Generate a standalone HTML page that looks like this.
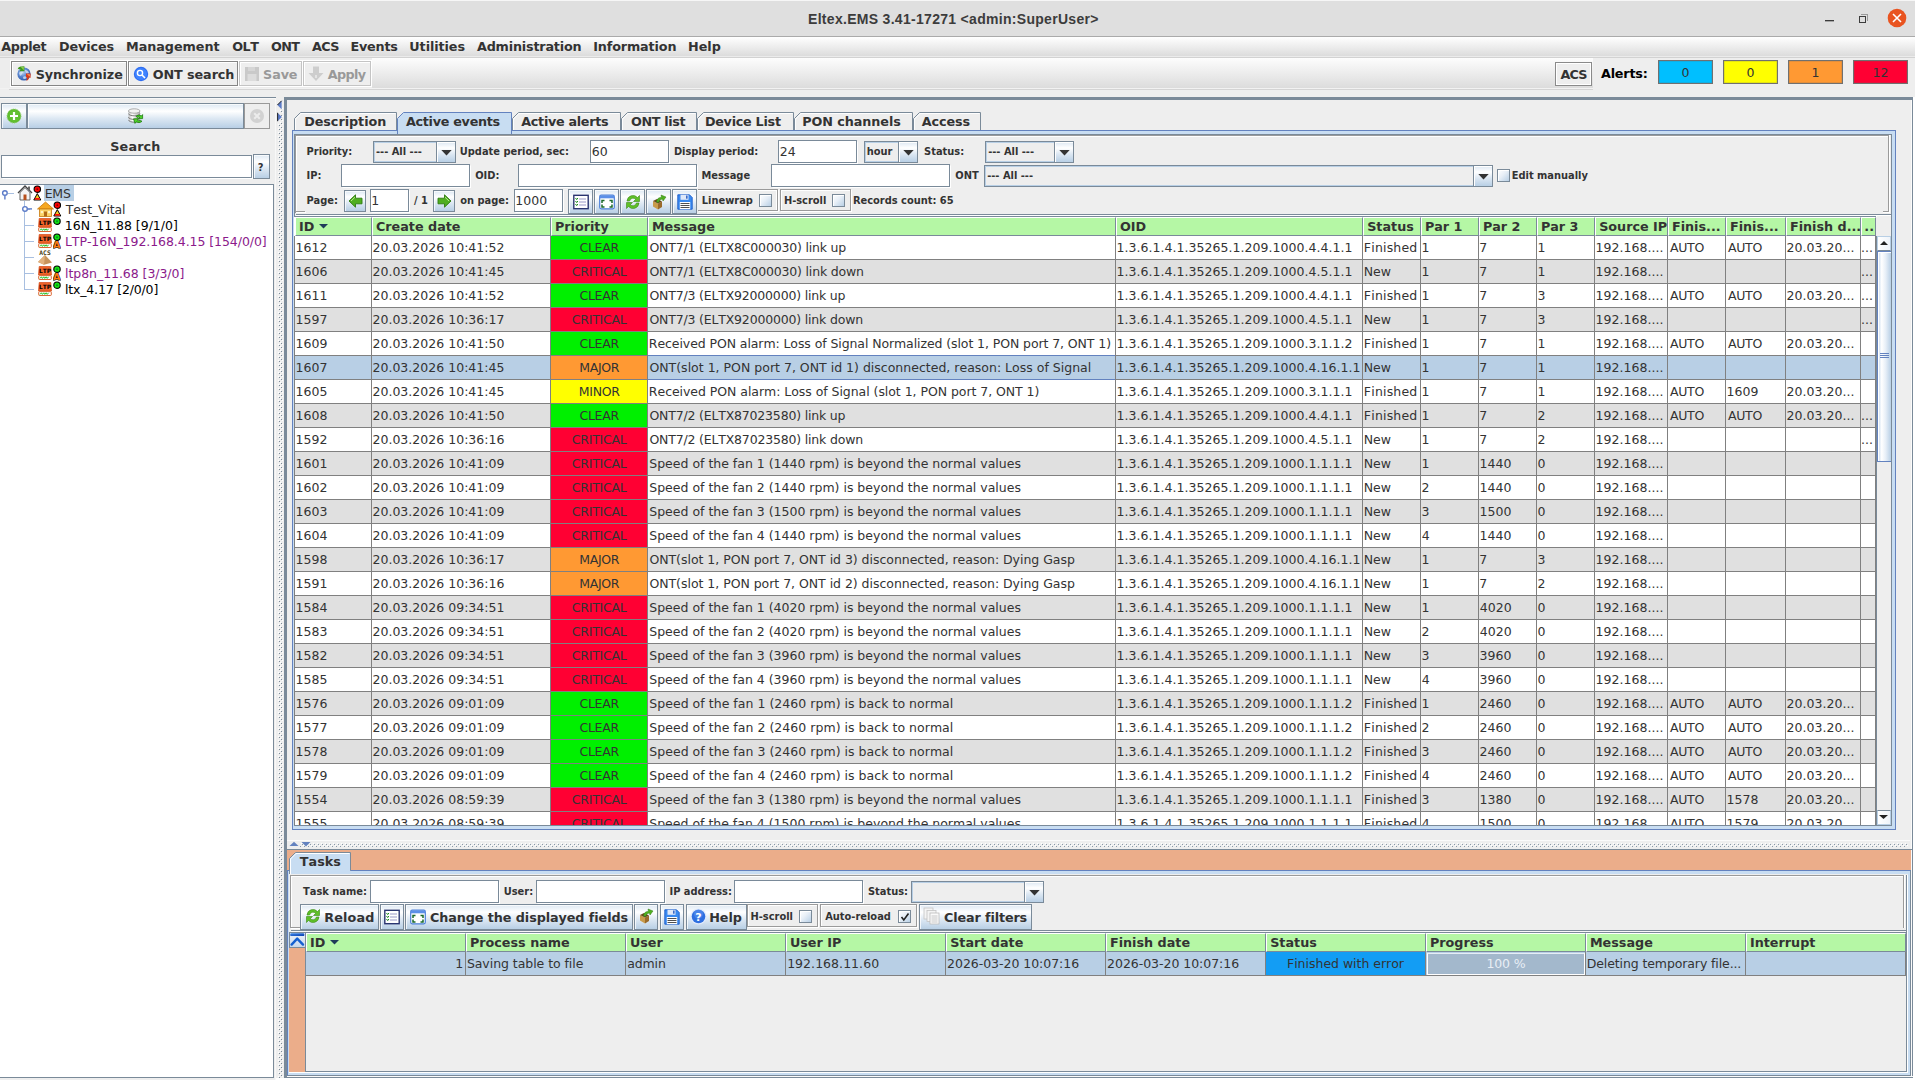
<!DOCTYPE html>
<html lang="en"><head><meta charset="utf-8"><title>Eltex.EMS 3.41-17271 &lt;admin:SuperUser&gt;</title>
<style>
html,body{margin:0;padding:0;background:#eeeeee;}
body{width:1915px;height:1080px;overflow:hidden;font-family:"DejaVu Sans","Liberation Sans",sans-serif;font-size:13px;color:#333333;font-kerning:none;font-variant-ligatures:none;-webkit-font-smoothing:antialiased;}
#root{position:relative;width:1915px;height:1080px;overflow:hidden;background:#eeeeee;}
#root div,#root span.t,#root svg{position:absolute;box-sizing:border-box;}
.t{white-space:pre;}
.btn{border:1px solid #7a8a99;background:linear-gradient(#dde8f3 0%,#ffffff 45%,#ffffff 50%,#b8cfe5 100%);}
.btn:after{content:"";position:absolute;left:0;top:0;right:0;bottom:0;border:1px solid #ffffff;border-right-color:transparent;border-bottom-color:transparent;}
.tf{border:1px solid #7a8a99;background:#ffffff;}
.tf:after{content:"";position:absolute;left:0;top:0;right:-2px;bottom:-2px;border:1px solid transparent;border-right-color:#ffffff;border-bottom-color:#ffffff;}
.hd{background:#b5f7a5;border-right:1px solid #7a8a99;border-bottom:1px solid #7a8a99;border-left:1px solid #ffffff;border-top:1px solid #ffffff;}

</style></head>
<body>
<div id="root">
<div style="left:0px;top:0px;width:1915px;height:37px;background:#dfdfdf;border-top:1px solid #f6f6f6;border-bottom:1px solid #aaaaaa;"></div>
<span class="t" style="left:808px;top:9px;width:290px;text-align:center;font:bold 14px/20px 'Liberation Sans','DejaVu Sans',sans-serif;color:#3c3c3c;letter-spacing:0.3px;">Eltex.EMS 3.41-17271 &lt;admin:SuperUser&gt;</span>
<div style="left:1825px;top:20px;width:9px;height:1px;background:#3c3c3c;"></div>
<div style="left:1825px;top:21px;width:9px;height:1px;background:#3c3c3c;opacity:.35;"></div>
<div style="left:1861px;top:14px;width:7px;height:7px;border:1px solid #9a9a9a;border-left:none;border-bottom:none;"></div>
<div style="left:1859px;top:16px;width:7px;height:7px;border:1.5px solid #3c3c3c;background:#dfdfdf;"></div>
<svg style="left:1887px;top:8px" width="20" height="20" viewBox="0 0 20 20"><circle cx="10" cy="10" r="9.3" fill="#e95420"/><path d="M6 6 L14 14 M14 6 L6 14" stroke="#fff" stroke-width="1.6" fill="none"/></svg>
<div style="left:0px;top:37px;width:1915px;height:19px;background:linear-gradient(#ffffff 0%,#dcdcdc 100%);"></div>
<div style="left:0px;top:56px;width:1915px;height:1px;background:#ebebeb;"></div>
<div style="left:0px;top:57px;width:1915px;height:1px;background:#d2d2d2;"></div>
<span class="t" style="left:1.19px;top:39px;font-size:12.75px;line-height:16px;letter-spacing:-0.356px;font-weight:bold;color:#333;">Applet</span>
<span class="t" style="left:59.03px;top:39px;font-size:12.75px;line-height:16px;letter-spacing:-0.122px;font-weight:bold;color:#333;">Devices</span>
<span class="t" style="left:126.03px;top:39px;font-size:12.75px;line-height:16px;letter-spacing:-0.032px;font-weight:bold;color:#333;">Management</span>
<span class="t" style="left:232.16px;top:39px;font-size:12.75px;line-height:16px;letter-spacing:-0.478px;font-weight:bold;color:#333;">OLT</span>
<span class="t" style="left:270.96px;top:39px;font-size:12.75px;line-height:16px;letter-spacing:-0.652px;font-weight:bold;color:#333;">ONT</span>
<span class="t" style="left:312.04px;top:39px;font-size:12.75px;line-height:16px;letter-spacing:-0.556px;font-weight:bold;color:#333;">ACS</span>
<span class="t" style="left:350.43px;top:39px;font-size:12.75px;line-height:16px;letter-spacing:-0.191px;font-weight:bold;color:#333;">Events</span>
<span class="t" style="left:409.33px;top:39px;font-size:12.75px;line-height:16px;letter-spacing:-0.073px;font-weight:bold;color:#333;">Utilities</span>
<span class="t" style="left:476.94px;top:39px;font-size:12.75px;line-height:16px;letter-spacing:-0.178px;font-weight:bold;color:#333;">Administration</span>
<span class="t" style="left:593.23px;top:39px;font-size:12.75px;line-height:16px;letter-spacing:-0.134px;font-weight:bold;color:#333;">Information</span>
<span class="t" style="left:688.03px;top:39px;font-size:12.75px;line-height:16px;letter-spacing:-0.024px;font-weight:bold;color:#333;">Help</span>
<div style="left:0px;top:58px;width:1593px;height:30px;background:linear-gradient(#fdfdfd 0%,#dcdcdc 100%);"></div>
<div style="left:0px;top:88px;width:1593px;height:1px;background:#f2f2f2;"></div>
<div style="left:9px;top:89px;width:1584px;height:1px;background:#d4d4d4;"></div>
<div style="left:0px;top:58px;width:372px;height:30px;background:#ededed;"></div>
<div style="left:11px;top:61px;width:116px;height:25px;border:1px solid #858585;background:#eeeeee;box-shadow:inset 1px 1px 0 #ffffff, 0 0 0 1px #ffffff;"></div>
<span class="t" style="left:35.68px;top:67px;font-size:12.75px;line-height:16px;letter-spacing:-0.064px;font-weight:bold;color:#333;">Synchronize</span>
<svg style="left:16px;top:65px" width="17" height="17" viewBox="0 0 17 17"><defs><radialGradient id="gl" cx=".4" cy=".35" r=".7"><stop offset="0" stop-color="#c8d8f0"/><stop offset=".5" stop-color="#5a86d0"/><stop offset="1" stop-color="#2a56a8"/></radialGradient></defs><circle cx="8" cy="9" r="6.6" fill="url(#gl)"/><path d="M3 8 Q5 5 7 7 Q6 10 4 11 Z M9 5 Q12 5 13 8 Q11 9 9.5 7.5 Z M7 12 Q9 10.5 11 12.5 Q9.5 14.5 7.5 14 Z" fill="#dfe8f8" opacity=".75"/><path d="M1.6 4.2 Q2.4 1.2 5.2 1.6 L8.4 1.2 V6.2 H3.6 L4.6 4.2 Q3.2 3.6 1.6 4.2 Z" fill="#3f9a1c"/><path d="M4.8 2 H7.8 V5.2 Z" fill="#8fd050"/><path d="M10 8.4 H14.6 V13 L13.2 12.2 Q12.8 15 10.2 15.8 Q11.6 13.6 11 12 L10 13 Z" fill="#d8381c"/><path d="M10.8 9.2 H13.8 V11.6 Z" fill="#ff9a5a"/></svg>
<div style="left:128px;top:61px;width:110px;height:25px;border:1px solid #858585;background:#eeeeee;box-shadow:inset 1px 1px 0 #ffffff, 0 0 0 1px #ffffff;"></div>
<span class="t" style="left:152.76px;top:67px;font-size:12.75px;line-height:16px;letter-spacing:-0.086px;font-weight:bold;color:#333;">ONT search</span>
<svg style="left:133px;top:66px" width="16" height="16" viewBox="0 0 16 16"><circle cx="8" cy="8" r="7.2" fill="#2f6df0"/><circle cx="8" cy="8" r="6" fill="#3f83ff"/><circle cx="7" cy="7" r="2.6" fill="none" stroke="#fff" stroke-width="1.4"/><path d="M9 9 L12 12" stroke="#fff" stroke-width="1.6"/></svg>
<div style="left:239px;top:61px;width:63px;height:25px;border:1px solid #c4c4c4;background:#eeeeee;box-shadow:inset 1px 1px 0 #ffffff, 0 0 0 1px #ffffff;"></div>
<span class="t" style="left:263.08px;top:67px;font-size:12.75px;line-height:16px;letter-spacing:-0.105px;font-weight:bold;color:#999999;">Save</span>
<svg style="left:244px;top:66px" width="16" height="16" viewBox="0 0 16 16"><rect x="1" y="1" width="14" height="14" fill="#c9c9c9"/><rect x="3.5" y="8" width="9" height="7" fill="#dcdcdc"/><rect x="4" y="1" width="7" height="4" fill="#d6d6d6"/></svg>
<div style="left:303px;top:61px;width:68px;height:25px;border:1px solid #c4c4c4;background:#eeeeee;box-shadow:inset 1px 1px 0 #ffffff, 0 0 0 1px #ffffff;"></div>
<span class="t" style="left:327.74px;top:67px;font-size:12.75px;line-height:16px;letter-spacing:-0.627px;font-weight:bold;color:#999999;">Apply</span>
<svg style="left:308px;top:66px" width="16" height="16" viewBox="0 0 16 16"><path d="M5 .5 H11 V7 H15.5 L8 15 L.5 7 H5 Z" fill="#cdcdcd"/><rect x="7.3" y="9" width="1.4" height="3" fill="#eee"/></svg>
<div style="left:1555px;top:62px;width:37px;height:24px;border:1px solid #8a8a8a;background:#eeeeee;box-shadow:inset 1px 1px 0 #ffffff,inset -1px -1px 0 #ffffff;"></div>
<span class="t" style="left:1560.44px;top:67px;font-size:12.75px;line-height:16px;letter-spacing:-0.706px;font-weight:bold;color:#333;">ACS</span>
<span class="t" style="left:1600.94px;top:66px;font-size:12.75px;line-height:16px;letter-spacing:-0.178px;font-weight:bold;color:#000;">Alerts:</span>
<div style="left:1658px;top:60px;width:55px;height:24px;background:#00bfff;border:1px solid #707070;box-shadow:inset 0 0 0 .5px rgba(100,100,100,.35);"></div>
<span class="t" style="left:1681.50px;top:65px;font-size:12.5px;line-height:16px;letter-spacing:0.047px;color:#333;">0</span>
<div style="left:1723px;top:60px;width:55px;height:24px;background:#ffff00;border:1px solid #707070;box-shadow:inset 0 0 0 .5px rgba(100,100,100,.35);"></div>
<span class="t" style="left:1746.50px;top:65px;font-size:12.5px;line-height:16px;letter-spacing:0.047px;color:#333;">0</span>
<div style="left:1788px;top:60px;width:55px;height:24px;background:#ff9933;border:1px solid #707070;box-shadow:inset 0 0 0 .5px rgba(100,100,100,.35);"></div>
<span class="t" style="left:1811.50px;top:65px;font-size:12.5px;line-height:16px;letter-spacing:0.047px;color:#333;">1</span>
<div style="left:1853px;top:60px;width:55px;height:24px;background:#ff0033;border:1px solid #707070;box-shadow:inset 0 0 0 .5px rgba(100,100,100,.35);"></div>
<span class="t" style="left:1872.50px;top:65px;font-size:12.5px;line-height:16px;letter-spacing:0.047px;color:#333;">12</span>
<div style="left:0px;top:97px;width:276px;height:1px;background:#7a8a99;"></div>
<div style="left:0px;top:98px;width:276px;height:1px;background:#f8f8f8;"></div>
<div style="left:275px;top:98px;width:1px;height:982px;background:#f8f8f8;"></div>
<div style="left:1px;top:103px;width:26px;height:26px;border:1px solid #7a8a99;background:linear-gradient(#dde8f3 0%,#ffffff 30%,#dde8f3 60%,#b8cfe5 100%);box-shadow:inset 1px 1px 0 rgba(255,255,255,.75);"></div>
<div style="left:27px;top:103px;width:217px;height:26px;border:1px solid #7a8a99;background:linear-gradient(#dde8f3 0%,#ffffff 30%,#dde8f3 60%,#b8cfe5 100%);box-shadow:inset 1px 1px 0 rgba(255,255,255,.75);"></div>
<div style="left:244px;top:103px;width:26px;height:26px;border:1px solid #999999;background:#eeeeee;"></div>
<svg style="left:6px;top:108px" width="16" height="16" viewBox="0 0 16 16"><circle cx="8" cy="8" r="7" fill="#5cb82c" stroke="#8fd06a" stroke-width="1" stroke-dasharray="1 1"/><circle cx="8" cy="8" r="6" fill="#62c030"/><path d="M8 4 V12 M4 8 H12" stroke="#fff" stroke-width="2.2"/></svg>
<svg style="left:128px;top:108px" width="16" height="17" viewBox="0 0 16 17"><defs><linearGradient id="dbg" x1="0" x2="1"><stop offset="0" stop-color="#c4c4c4"/><stop offset=".35" stop-color="#ffffff"/><stop offset="1" stop-color="#a8a8a8"/></linearGradient></defs><path d="M.5 3 V11.5 A5.7 2.3 0 0 0 12 11.5 V3 Z" fill="url(#dbg)"/><ellipse cx="6.2" cy="3" rx="5.8" ry="2.2" fill="#f4f4f4" stroke="#9a9a9a" stroke-width=".8"/><path d="M.5 5.6 A5.7 2.2 0 0 0 12 5.6 M.5 9.2 A5.7 2.2 0 0 0 12 9.2 M.6 12 A5.7 2.2 0 0 0 12 12" fill="none" stroke="#7e7e7e" stroke-width="1"/><path d="M8 8.2 Q11 6 13.4 8 L14.6 6.6 V10.6 H10.4 L11.8 9.4 Q10.6 8.4 9 9.4 Z" fill="#4ed62a" stroke="#1f7a12" stroke-width=".8"/><path d="M14 13.4 Q11 15.8 8.2 13.8 L7 15.4 L5.6 10.8 H10.2 L9.6 12.4 Q10.8 13.4 12.6 12.4 Z" fill="#4ed62a" stroke="#1f7a12" stroke-width=".8"/></svg>
<svg style="left:249px;top:108px" width="16" height="16" viewBox="0 0 16 16"><circle cx="8" cy="8" r="7" fill="#d2d2d2"/><path d="M5.2 5.2 L10.8 10.8 M10.8 5.2 L5.2 10.8" stroke="#ececec" stroke-width="2"/></svg>
<span class="t" style="left:110.28px;top:139px;font-size:12.75px;line-height:16px;letter-spacing:0.151px;font-weight:bold;color:#333;">Search</span>
<div class="tf" style="left:1px;top:155px;width:251px;height:23px;"></div>
<div style="left:253px;top:154px;width:17px;height:25px;border:1px solid #7a8a99;background:linear-gradient(#dde8f3 0%,#ffffff 30%,#dde8f3 60%,#b8cfe5 100%);box-shadow:inset 1px 1px 0 rgba(255,255,255,.75);"></div>
<span class="t" style="left:257.82px;top:162px;font-size:9.9px;line-height:12px;font-weight:bold;color:#333;">?</span>
<div style="left:0px;top:184px;width:274px;height:894px;background:#ffffff;border:1px solid #7a8a99;border-left:none;"></div>
<div style="left:44px;top:185px;width:30px;height:16px;background:#b8cfe5;"></div>
<div style="left:8px;top:193px;width:6px;height:1px;background:#a8bfe0;"></div>
<div style="left:24px;top:201px;width:1px;height:89px;background:#a8bfe0;"></div>
<div style="left:24px;top:209px;width:6px;height:1px;background:#a8bfe0;"></div>
<div style="left:24px;top:225px;width:10px;height:1px;background:#a8bfe0;"></div>
<div style="left:24px;top:241px;width:10px;height:1px;background:#a8bfe0;"></div>
<div style="left:24px;top:257px;width:10px;height:1px;background:#a8bfe0;"></div>
<div style="left:24px;top:273px;width:10px;height:1px;background:#a8bfe0;"></div>
<div style="left:24px;top:289px;width:10px;height:1px;background:#a8bfe0;"></div>
<svg style="left:0px;top:189px" width="10" height="12" viewBox="0 0 10 12"><circle cx="4.9" cy="4" r="2.3" fill="#fff" stroke="#5b7bc8" stroke-width="1.4"/><path d="M4.9 6.5 V10.6" stroke="#5b7bc8" stroke-width="1.4"/></svg>
<svg style="left:21px;top:204px" width="12" height="10" viewBox="0 0 12 10"><circle cx="4" cy="4.9" r="2.3" fill="#fff" stroke="#5b7bc8" stroke-width="1.4"/><path d="M6.4 4.9 H11" stroke="#5b7bc8" stroke-width="1.4"/></svg>
<svg style="left:17px;top:185px" width="16" height="16" viewBox="0 0 16 16"><path d="M1 8 L8 1 L15 8" fill="none" stroke="#444" stroke-width="1.4"/><path d="M3 7.5 L8 2.6 L13 7.5 V15 H3 Z" fill="#f4f4f4" stroke="#555" stroke-width=".9"/><rect x="6.5" y="9.5" width="3" height="5.5" fill="#b8501c"/><rect x="11" y="1.5" width="2" height="4" fill="#666"/></svg>
<svg style="left:33px;top:185px" width="9" height="16" viewBox="0 0 9 16"><circle cx="4.3" cy="4.2" r="3.2" fill="#ff0000" stroke="#000" stroke-width="1.1"/><circle cx="4.3" cy="4.2" r=".9" fill="#800"/><path d="M4.3 8.6 L7.8 15 H.8 Z" fill="#f8d020" stroke="#000" stroke-width="1"/><path d="M1.8 13.8 H6.8" stroke="#ff1010" stroke-width="1.7"/></svg>
<svg style="left:37px;top:201px" width="17" height="16" viewBox="0 0 17 16"><path d="M.5 8 L8.5 1 L16.5 8 Z" fill="#f6a821" stroke="#c87a10" stroke-width=".8"/><rect x="2.5" y="8" width="12" height="7.5" fill="#fbd36a" stroke="#c87a10" stroke-width=".8"/><rect x="7" y="10.5" width="3" height="5" fill="#b06a18"/><rect x="3.8" y="10" width="2.2" height="2.2" fill="#fff3c8"/><rect x="11" y="10" width="2.2" height="2.2" fill="#fff3c8"/></svg>
<svg style="left:53px;top:201px" width="9" height="16" viewBox="0 0 9 16"><circle cx="4.3" cy="4.2" r="3.2" fill="#ff0000" stroke="#000" stroke-width="1.1"/><circle cx="4.3" cy="4.2" r=".9" fill="#800"/><path d="M4.3 8.6 L7.8 15 H.8 Z" fill="#f8d020" stroke="#000" stroke-width="1"/><path d="M1.8 13.8 H6.8" stroke="#ff1010" stroke-width="1.7"/></svg>
<svg style="left:38px;top:218px" width="14" height="14" viewBox="0 0 14 14"><path d="M1.2 .5 H12.8 L13.5 9 H.5 Z" fill="#f0642a" stroke="#d04a18" stroke-width=".7"/><text x="7" y="7.3" font-family="DejaVu Sans" font-weight="bold" font-size="5.9" fill="#000" text-anchor="middle">LTP</text><rect x=".7" y="9.6" width="12.6" height="3.9" rx=".8" fill="#fff" stroke="#d8561c" stroke-width=".9"/><path d="M2 12.4 l1.4 -1.6 l1 1.6 l1.4 -1.6 l1 1.6 l1.4 -1.6 l1 1.6 l1.4 -1.6" stroke="#20c020" stroke-width="1" fill="none"/></svg>
<svg style="left:53px;top:217px" width="9" height="9" viewBox="0 0 9 9"><circle cx="4" cy="4.2" r="3.2" fill="#14e614" stroke="#000" stroke-width="1.1"/><circle cx="4" cy="4.2" r="1" fill="#0a8a2a"/></svg>
<svg style="left:38px;top:234px" width="14" height="14" viewBox="0 0 14 14"><path d="M1.2 .5 H12.8 L13.5 9 H.5 Z" fill="#f0642a" stroke="#d04a18" stroke-width=".7"/><text x="7" y="7.3" font-family="DejaVu Sans" font-weight="bold" font-size="5.9" fill="#000" text-anchor="middle">LTP</text><rect x=".7" y="9.6" width="12.6" height="3.9" rx=".8" fill="#fff" stroke="#d8561c" stroke-width=".9"/><path d="M2 12.4 l1.4 -1.6 l1 1.6 l1.4 -1.6 l1 1.6 l1.4 -1.6 l1 1.6 l1.4 -1.6" stroke="#20c020" stroke-width="1" fill="none"/></svg>
<svg style="left:53px;top:233px" width="9" height="9" viewBox="0 0 9 9"><circle cx="4" cy="4.2" r="3.2" fill="#14e614" stroke="#000" stroke-width="1.1"/><circle cx="4" cy="4.2" r="1" fill="#0a8a2a"/></svg>
<svg style="left:53px;top:240px" width="8" height="9" viewBox="0 0 8 9"><text x="3.8" y="8.3" font-family="DejaVu Sans" font-weight="bold" font-size="9.5" fill="#ff7a10" stroke="#000" stroke-width="1.1" paint-order="stroke" text-anchor="middle">A</text></svg>
<svg style="left:37px;top:249px" width="17" height="16" viewBox="0 0 17 16"><text x="8" y="5.6" font-family="DejaVu Sans Mono" font-weight="bold" font-size="6.3" fill="#4a3a10" text-anchor="middle">ACS</text><path d="M8 6 L15 13.5 L7 15.8 L1 13 Z" fill="#c8945c"/><path d="M8 6 L7 15.8 L1 13 Z" fill="#e2b27e"/></svg>
<svg style="left:38px;top:266px" width="14" height="14" viewBox="0 0 14 14"><path d="M1.2 .5 H12.8 L13.5 9 H.5 Z" fill="#f0642a" stroke="#d04a18" stroke-width=".7"/><text x="7" y="7.3" font-family="DejaVu Sans" font-weight="bold" font-size="5.9" fill="#000" text-anchor="middle">LTP</text><rect x=".7" y="9.6" width="12.6" height="3.9" rx=".8" fill="#fff" stroke="#d8561c" stroke-width=".9"/><path d="M2 12.4 l1.4 -1.6 l1 1.6 l1.4 -1.6 l1 1.6 l1.4 -1.6 l1 1.6 l1.4 -1.6" stroke="#20c020" stroke-width="1" fill="none"/></svg>
<svg style="left:53px;top:265px" width="9" height="9" viewBox="0 0 9 9"><circle cx="4" cy="4.2" r="3.2" fill="#14e614" stroke="#000" stroke-width="1.1"/><circle cx="4" cy="4.2" r="1" fill="#0a8a2a"/></svg>
<svg style="left:53px;top:272px" width="8" height="9" viewBox="0 0 8 9"><text x="3.8" y="8.3" font-family="DejaVu Sans" font-weight="bold" font-size="9.5" fill="#ff7a10" stroke="#000" stroke-width="1.1" paint-order="stroke" text-anchor="middle">A</text></svg>
<svg style="left:38px;top:282px" width="14" height="14" viewBox="0 0 14 14"><path d="M1.2 .5 H12.8 L13.5 9 H.5 Z" fill="#f0642a" stroke="#d04a18" stroke-width=".7"/><text x="7" y="7.3" font-family="DejaVu Sans" font-weight="bold" font-size="5.9" fill="#000" text-anchor="middle">LTP</text><rect x=".7" y="9.6" width="12.6" height="3.9" rx=".8" fill="#fff" stroke="#d8561c" stroke-width=".9"/><path d="M2 12.4 l1.4 -1.6 l1 1.6 l1.4 -1.6 l1 1.6 l1.4 -1.6 l1 1.6 l1.4 -1.6" stroke="#20c020" stroke-width="1" fill="none"/></svg>
<svg style="left:53px;top:281px" width="9" height="9" viewBox="0 0 9 9"><circle cx="4" cy="4.2" r="3.2" fill="#14e614" stroke="#000" stroke-width="1.1"/><circle cx="4" cy="4.2" r="1" fill="#0a8a2a"/></svg>
<span class="t" style="left:44.67px;top:186px;font-size:12.5px;line-height:16px;letter-spacing:-0.197px;color:#333;">EMS</span>
<span class="t" style="left:65.74px;top:202px;font-size:12.5px;line-height:16px;letter-spacing:-0.135px;color:#333;">Test_Vital</span>
<span class="t" style="left:64.83px;top:218px;font-size:12.5px;line-height:16px;letter-spacing:-0.022px;color:#000;">16N_11.88 [9/1/0]</span>
<span class="t" style="left:64.97px;top:234px;font-size:12.5px;line-height:16px;letter-spacing:-0.064px;color:#8b1a8b;">LTP-16N_192.168.4.15 [154/0/0]</span>
<span class="t" style="left:65.15px;top:250px;font-size:12.5px;line-height:16px;letter-spacing:0.258px;color:#333;">acs</span>
<span class="t" style="left:65.02px;top:266px;font-size:12.5px;line-height:16px;letter-spacing:-0.054px;color:#8b1a8b;">ltp8n_11.68 [3/3/0]</span>
<span class="t" style="left:65.02px;top:282px;font-size:12.5px;line-height:16px;letter-spacing:-0.174px;color:#000;">ltx_4.17 [2/0/0]</span>
<div style="left:276px;top:97px;width:8px;height:982px;background:#eeeeee;"></div>
<svg style="left:277px;top:100px" width="7" height="980" viewBox="0 0 7 980"><defs><pattern id="dp" x="1" y="0" width="4" height="4" patternUnits="userSpaceOnUse"><rect x="0" y="0" width="1" height="1" fill="#ffffff"/><rect x="1" y="1" width="1" height="1" fill="#7a8a99"/><rect x="2" y="2" width="1" height="1" fill="#ffffff"/><rect x="3" y="3" width="1" height="1" fill="#7a8a99"/></pattern></defs><rect x="1" y="8" width="5" height="970" fill="url(#dp)"/><rect x="0" y="0" width="5" height="10" fill="#eeeeee"/><rect x="0" y="12" width="4" height="10" fill="#eeeeee"/><path d="M4.6 .8 V9.2 L.4 5 Z" fill="#5b7bc8"/><path d="M4.6 .8 L.4 5" stroke="#111" stroke-width=".9"/><path d="M.6 12.8 V21.2 L4.8 17 Z" fill="#5b7bc8"/><path d="M.6 12.8 V21.2" stroke="#111" stroke-width=".9"/></svg>
<div style="left:284px;top:97px;width:1629px;height:3px;background:#7a8a99;"></div>
<div style="left:284px;top:97px;width:3px;height:983px;background:#7a8a99;"></div>
<div style="left:1912px;top:99px;width:1px;height:981px;background:#7a8a99;"></div>
<div style="left:1911px;top:100px;width:1px;height:980px;background:#fbfbfb;"></div>
<div style="left:287px;top:1076px;width:1626px;height:1px;background:#fbfbfb;"></div>
<div style="left:287px;top:1077px;width:1626px;height:1px;background:#7a8a99;"></div>
<div style="left:1913px;top:97px;width:2px;height:983px;background:#ffffff;"></div>
<div style="left:276px;top:1078px;width:1639px;height:2px;background:#ffffff;"></div>
<div style="left:292px;top:130px;width:1604px;height:700px;border:1px solid #6382bf;background:#c8ddf2;"></div>
<div style="left:294px;top:134px;width:1598px;height:692px;background:#eeeeee;"></div>
<svg style="left:294px;top:112px" width="103" height="18" viewBox="0 0 103 18"><path d="M.5 18 V6.5 L6.5 .5 H102.5 V18" fill="#eeeeee" stroke="#7a8a99" stroke-width="1"/><path d="M1.5 18 V7 L7 1.5 H101.5" fill="none" stroke="#ffffff" stroke-width="1" opacity="0.9"/></svg>
<span class="t" style="left:304.13px;top:114px;font-size:12.75px;line-height:16px;letter-spacing:-0.030px;font-weight:bold;color:#333;">Description</span>
<svg style="left:397px;top:112px" width="115" height="22" viewBox="0 0 115 22"><path d="M.5 22 V6.5 L6.5 .5 H114.5 V22" fill="#c8ddf2" stroke="#6382bf" stroke-width="1"/><path d="M1.5 22 V7 L7 1.5 H113.5" fill="none" stroke="#ffffff" stroke-width="1" opacity="0.0"/></svg>
<span class="t" style="left:405.94px;top:114px;font-size:12.75px;line-height:16px;letter-spacing:-0.282px;font-weight:bold;color:#333;">Active events</span>
<svg style="left:512px;top:112px" width="109" height="18" viewBox="0 0 109 18"><path d="M.5 18 V6.5 L6.5 .5 H108.5 V18" fill="#eeeeee" stroke="#7a8a99" stroke-width="1"/><path d="M1.5 18 V7 L7 1.5 H107.5" fill="none" stroke="#ffffff" stroke-width="1" opacity="0.9"/></svg>
<span class="t" style="left:521.24px;top:114px;font-size:12.75px;line-height:16px;letter-spacing:-0.293px;font-weight:bold;color:#333;">Active alerts</span>
<svg style="left:621px;top:112px" width="76" height="18" viewBox="0 0 76 18"><path d="M.5 18 V6.5 L6.5 .5 H75.5 V18" fill="#eeeeee" stroke="#7a8a99" stroke-width="1"/><path d="M1.5 18 V7 L7 1.5 H74.5" fill="none" stroke="#ffffff" stroke-width="1" opacity="0.9"/></svg>
<span class="t" style="left:630.96px;top:114px;font-size:12.75px;line-height:16px;letter-spacing:-0.363px;font-weight:bold;color:#333;">ONT list</span>
<svg style="left:697px;top:112px" width="97" height="18" viewBox="0 0 97 18"><path d="M.5 18 V6.5 L6.5 .5 H96.5 V18" fill="#eeeeee" stroke="#7a8a99" stroke-width="1"/><path d="M1.5 18 V7 L7 1.5 H95.5" fill="none" stroke="#ffffff" stroke-width="1" opacity="0.9"/></svg>
<span class="t" style="left:704.93px;top:114px;font-size:12.75px;line-height:16px;letter-spacing:-0.267px;font-weight:bold;color:#333;">Device List</span>
<svg style="left:794px;top:112px" width="119" height="18" viewBox="0 0 119 18"><path d="M.5 18 V6.5 L6.5 .5 H118.5 V18" fill="#eeeeee" stroke="#7a8a99" stroke-width="1"/><path d="M1.5 18 V7 L7 1.5 H117.5" fill="none" stroke="#ffffff" stroke-width="1" opacity="0.9"/></svg>
<span class="t" style="left:802.33px;top:114px;font-size:12.75px;line-height:16px;letter-spacing:-0.074px;font-weight:bold;color:#333;">PON channels</span>
<svg style="left:913px;top:112px" width="68" height="18" viewBox="0 0 68 18"><path d="M.5 18 V6.5 L6.5 .5 H67.5 V18" fill="#eeeeee" stroke="#7a8a99" stroke-width="1"/><path d="M1.5 18 V7 L7 1.5 H66.5" fill="none" stroke="#ffffff" stroke-width="1" opacity="0.9"/></svg>
<span class="t" style="left:921.84px;top:114px;font-size:12.75px;line-height:16px;letter-spacing:-0.108px;font-weight:bold;color:#333;">Access</span>
<div style="left:294px;top:134px;width:1598px;height:1px;background:#7a8a99;"></div>
<div style="left:294px;top:134px;width:1px;height:692px;background:#7a8a99;"></div>
<div style="left:1891px;top:134px;width:1px;height:692px;background:#7a8a99;"></div>
<div style="left:294px;top:825px;width:1598px;height:1px;background:#7a8a99;"></div>
<div style="left:295px;top:135px;width:1594px;height:78px;border:1px solid #9a9a9a;border-bottom:none;box-shadow:inset 1px 1px 0 #ffffff, 1px 0 0 #ffffff;"></div>
<div style="left:295px;top:211px;width:10px;height:1px;background:#9a9a9a;"></div>
<div style="left:296px;top:212px;width:10px;height:1px;background:#ffffff;"></div>
<div style="left:1883px;top:211px;width:5px;height:1px;background:#9a9a9a;"></div>
<div style="left:1883px;top:212px;width:6px;height:1px;background:#ffffff;"></div>
<span class="t" style="left:306.59px;top:146px;font-size:9.9px;line-height:12px;font-weight:bold;color:#333;">Priority:</span>
<div style="left:373px;top:141px;width:83px;height:22px;border:1px solid #7a8a99;background:#eeeeee;box-shadow:inset 0 0 0 1px #b8cfe5;"></div>
<div style="left:436px;top:141px;width:20px;height:22px;border:1px solid #7a8a99;background:linear-gradient(#dde8f3 0%,#ffffff 30%,#dde8f3 60%,#b8cfe5 100%);box-shadow:inset 1px 1px 0 #ffffff;"></div>
<svg style="left:441px;top:150px" width="11" height="6" viewBox="0 0 11 6"><path d="M.3 0 H10.7 L5.5 5.4 Z" fill="#333"/></svg>
<span class="t" style="left:375.96px;top:146px;font-size:9.9px;line-height:12px;font-weight:bold;color:#333;">--- All ---</span>
<span class="t" style="left:459.79px;top:146px;font-size:9.9px;line-height:12px;font-weight:bold;color:#333;">Update period, sec:</span>
<div class="tf" style="left:590px;top:140px;width:79px;height:23px;"></div>
<span class="t" style="left:591.83px;top:144px;font-size:12.5px;line-height:16px;letter-spacing:0.047px;color:#333;">60</span>
<span class="t" style="left:673.89px;top:146px;font-size:9.9px;line-height:12px;font-weight:bold;color:#333;">Display period:</span>
<div class="tf" style="left:778px;top:140px;width:79px;height:23px;"></div>
<span class="t" style="left:779.78px;top:144px;font-size:12.5px;line-height:16px;letter-spacing:0.047px;color:#333;">24</span>
<div style="left:864px;top:141px;width:54px;height:22px;border:1px solid #7a8a99;background:#eeeeee;box-shadow:inset 0 0 0 1px #b8cfe5;"></div>
<div style="left:898px;top:141px;width:20px;height:22px;border:1px solid #7a8a99;background:linear-gradient(#dde8f3 0%,#ffffff 30%,#dde8f3 60%,#b8cfe5 100%);box-shadow:inset 1px 1px 0 #ffffff;"></div>
<svg style="left:903px;top:150px" width="11" height="6" viewBox="0 0 11 6"><path d="M.3 0 H10.7 L5.5 5.4 Z" fill="#333"/></svg>
<span class="t" style="left:866.67px;top:146px;font-size:9.9px;line-height:12px;font-weight:bold;color:#333;">hour</span>
<span class="t" style="left:924.09px;top:146px;font-size:9.9px;line-height:12px;font-weight:bold;color:#333;">Status:</span>
<div style="left:985px;top:141px;width:89px;height:22px;border:1px solid #7a8a99;background:#eeeeee;box-shadow:inset 0 0 0 1px #b8cfe5;"></div>
<div style="left:1054px;top:141px;width:20px;height:22px;border:1px solid #7a8a99;background:linear-gradient(#dde8f3 0%,#ffffff 30%,#dde8f3 60%,#b8cfe5 100%);box-shadow:inset 1px 1px 0 #ffffff;"></div>
<svg style="left:1059px;top:150px" width="11" height="6" viewBox="0 0 11 6"><path d="M.3 0 H10.7 L5.5 5.4 Z" fill="#333"/></svg>
<span class="t" style="left:988.16px;top:146px;font-size:9.9px;line-height:12px;font-weight:bold;color:#333;">--- All ---</span>
<span class="t" style="left:306.59px;top:170px;font-size:9.9px;line-height:12px;font-weight:bold;color:#333;">IP:</span>
<div class="tf" style="left:341px;top:164px;width:129px;height:23px;"></div>
<span class="t" style="left:475.21px;top:170px;font-size:9.9px;line-height:12px;font-weight:bold;color:#333;">OID:</span>
<div class="tf" style="left:518px;top:164px;width:179px;height:23px;"></div>
<span class="t" style="left:701.39px;top:170px;font-size:9.9px;line-height:12px;font-weight:bold;color:#333;">Message</span>
<div class="tf" style="left:771px;top:164px;width:179px;height:23px;"></div>
<span class="t" style="left:955.31px;top:170px;font-size:9.9px;line-height:12px;font-weight:bold;color:#333;">ONT</span>
<div style="left:984px;top:165px;width:509px;height:22px;border:1px solid #7a8a99;background:#eeeeee;box-shadow:inset 0 0 0 1px #b8cfe5;"></div>
<div style="left:1473px;top:165px;width:20px;height:22px;border:1px solid #7a8a99;background:linear-gradient(#dde8f3 0%,#ffffff 30%,#dde8f3 60%,#b8cfe5 100%);box-shadow:inset 1px 1px 0 #ffffff;"></div>
<svg style="left:1478px;top:174px" width="11" height="6" viewBox="0 0 11 6"><path d="M.3 0 H10.7 L5.5 5.4 Z" fill="#333"/></svg>
<span class="t" style="left:987.16px;top:170px;font-size:9.9px;line-height:12px;font-weight:bold;color:#333;">--- All ---</span>
<div style="left:1497px;top:169px;width:13px;height:13px;border:1px solid #7a8a99;background:linear-gradient(135deg,#ffffff 0%,#e8eff7 45%,#b8cfe5 100%);box-shadow:inset 1px 1px 0 #ffffff;"></div>
<span class="t" style="left:1511.69px;top:170px;font-size:9.9px;line-height:12px;font-weight:bold;color:#333;">Edit manually</span>
<span class="t" style="left:306.39px;top:195px;font-size:9.9px;line-height:12px;font-weight:bold;color:#333;">Page:</span>
<div style="left:344px;top:190px;width:22px;height:22px;border:1px solid #7a8a99;background:linear-gradient(#dde8f3 0%,#ffffff 30%,#dde8f3 60%,#b8cfe5 100%);box-shadow:inset 1px 1px 0 rgba(255,255,255,.75);"></div>
<div class="tf" style="left:370px;top:189px;width:39px;height:23px;"></div>
<span class="t" style="left:371.33px;top:193px;font-size:12.5px;line-height:16px;letter-spacing:0.047px;color:#333;">1</span>
<span class="t" style="left:414.00px;top:195px;font-size:9.9px;line-height:12px;font-weight:bold;color:#333;">/ 1</span>
<div style="left:433px;top:190px;width:22px;height:22px;border:1px solid #7a8a99;background:linear-gradient(#dde8f3 0%,#ffffff 30%,#dde8f3 60%,#b8cfe5 100%);box-shadow:inset 1px 1px 0 rgba(255,255,255,.75);"></div>
<svg style="left:347.5px;top:194px" width="15" height="14" viewBox="0 0 15 14"><path d="M1 7 L7.5 .8 V4.2 H14 V9.8 H7.5 V13.2 Z" fill="#4fae20" stroke="#2e7a10" stroke-width=".9"/><path d="M3 7 L7 3.2" stroke="#b8ea8a" stroke-width="1"/></svg>
<svg style="left:436.5px;top:194px" width="15" height="14" viewBox="0 0 15 14"><path d="M14 7 L7.5 .8 V4.2 H1 V9.8 H7.5 V13.2 Z" fill="#4fae20" stroke="#2e7a10" stroke-width=".9"/><path d="M12 7 L8 3.2" stroke="#b8ea8a" stroke-width="1"/></svg>
<span class="t" style="left:460.27px;top:195px;font-size:9.9px;line-height:12px;font-weight:bold;color:#333;">on page:</span>
<div class="tf" style="left:514px;top:189px;width:49px;height:23px;"></div>
<span class="t" style="left:515.33px;top:193px;font-size:12.5px;line-height:16px;letter-spacing:0.047px;color:#333;">1000</span>
<div style="left:568px;top:189px;width:25px;height:25px;border:1px solid #7a8a99;background:linear-gradient(#dde8f3 0%,#ffffff 30%,#dde8f3 60%,#b8cfe5 100%);box-shadow:inset 1px 1px 0 rgba(255,255,255,.75);"></div>
<svg style="left:572.5px;top:193.5px" width="16" height="16" viewBox="0 0 16 16"><rect x=".8" y="1.3" width="14.4" height="13.4" fill="#fff" stroke="#2a3570" stroke-width="1.4"/><path d="M6 5 H13 M6 8 H13 M6 11 H13" stroke="#9a9ac8" stroke-width="1.2"/><path d="M2.5 4 l1.2 1.6 l1.2 -1.6 M2.5 7 l1.2 1.6 l1.2 -1.6 M2.5 10 l1.2 1.6 l1.2 -1.6" stroke="#1a8a1a" stroke-width="1" fill="none"/></svg>
<div style="left:594px;top:189px;width:25px;height:25px;border:1px solid #7a8a99;background:linear-gradient(#dde8f3 0%,#ffffff 30%,#dde8f3 60%,#b8cfe5 100%);box-shadow:inset 1px 1px 0 rgba(255,255,255,.75);"></div>
<svg style="left:598.5px;top:193.5px" width="16" height="16" viewBox="0 0 16 16"><rect x=".7" y="1.2" width="14.6" height="13.6" rx="1.5" fill="#fff" stroke="#4a7fd8" stroke-width="1.2"/><rect x="1" y="1.5" width="14" height="2.8" fill="#5b8fe8"/><path d="M3 9 V6.5 H5.5 M10.5 6.5 H13 V9 M13 10.5 V13 H10.5 M5.5 13 H3 V10.5" stroke="#1a6a2a" stroke-width="1.5" fill="none"/></svg>
<div style="left:620px;top:189px;width:25px;height:25px;border:1px solid #7a8a99;background:linear-gradient(#dde8f3 0%,#ffffff 30%,#dde8f3 60%,#b8cfe5 100%);box-shadow:inset 1px 1px 0 rgba(255,255,255,.75);"></div>
<svg style="left:624.5px;top:193.5px" width="16" height="16" viewBox="0 0 16 16"><path d="M2 7 A6 6 0 0 1 12.5 3.5 L14.5 1.5 V7.5 H8.5 L10.7 5.3 A3.6 3.6 0 0 0 4.6 7 Z" fill="#5fc028" stroke="#3a8a18" stroke-width=".6"/><path d="M14 9 A6 6 0 0 1 3.5 12.5 L1.5 14.5 V8.5 H7.5 L5.3 10.7 A3.6 3.6 0 0 0 11.4 9 Z" fill="#5fc028" stroke="#3a8a18" stroke-width=".6"/></svg>
<div style="left:646px;top:189px;width:25px;height:25px;border:1px solid #7a8a99;background:linear-gradient(#dde8f3 0%,#ffffff 30%,#dde8f3 60%,#b8cfe5 100%);box-shadow:inset 1px 1px 0 rgba(255,255,255,.75);"></div>
<svg style="left:650.5px;top:193.5px" width="16" height="16" viewBox="0 0 16 16"><path d="M2 7 L7 9.5 V15.5 L2 12.5 Z" fill="#c89a4a"/><path d="M7 9.5 L11 7.5 V13 L7 15.5 Z" fill="#9a6a2a"/><path d="M2 7 L6 5 L11 7.5 L7 9.5 Z" fill="#6a4a1a"/><path d="M5.5 8 Q6 3.5 10.5 3.2 L10 1 L15 3 L12 7 L11.5 5 Q8.5 5 7.5 8.5 Z" fill="#4fb020" stroke="#2e7a10" stroke-width=".5"/></svg>
<div style="left:672px;top:189px;width:25px;height:25px;border:1px solid #7a8a99;background:linear-gradient(#dde8f3 0%,#ffffff 30%,#dde8f3 60%,#b8cfe5 100%);box-shadow:inset 1px 1px 0 rgba(255,255,255,.75);"></div>
<svg style="left:676.5px;top:193.5px" width="16" height="16" viewBox="0 0 16 16"><path d="M.8 .8 H12.5 L15.2 3.5 V15.2 H.8 Z" fill="#3a8af0" stroke="#1a5ac8" stroke-width=".9"/><rect x="3.5" y=".8" width="8" height="5" fill="#dfe8f8"/><rect x="9" y="1.5" width="1.6" height="3.2" fill="#3a6ac8"/><rect x="2.8" y="8" width="10.4" height="7.2" fill="#fff"/><path d="M3.5 9.5 H12.5 M3.5 11.5 H12.5 M3.5 13.5 H12.5" stroke="#222" stroke-width=".8"/></svg>
<div style="left:698px;top:189px;width:80px;height:22px;border:1px solid #9a9a9a;border-left:none;box-shadow:inset -1px 1px 0 #ffffff, 1px 1px 0 #ffffff;"></div>
<span class="t" style="left:701.79px;top:195px;font-size:9.9px;line-height:12px;font-weight:bold;color:#333;">Linewrap</span>
<div style="left:759px;top:194px;width:13px;height:13px;border:1px solid #7a8a99;background:linear-gradient(135deg,#ffffff 0%,#e8eff7 45%,#b8cfe5 100%);box-shadow:inset 1px 1px 0 #ffffff;"></div>
<div style="left:780px;top:189px;width:71px;height:22px;border:1px solid #9a9a9a;box-shadow:inset 1px 1px 0 #ffffff, 1px 1px 0 #ffffff;"></div>
<span class="t" style="left:783.89px;top:195px;font-size:9.9px;line-height:12px;font-weight:bold;color:#333;">H-scroll</span>
<div style="left:832px;top:194px;width:13px;height:13px;border:1px solid #7a8a99;background:linear-gradient(135deg,#ffffff 0%,#e8eff7 45%,#b8cfe5 100%);box-shadow:inset 1px 1px 0 #ffffff;"></div>
<span class="t" style="left:852.89px;top:195px;font-size:9.9px;line-height:12px;font-weight:bold;color:#333;">Records count: 65</span>
<div style="left:296px;top:214px;width:1596px;height:1px;background:#7a8a99;"></div>
<div style="left:296px;top:215px;width:1595px;height:1px;background:#ffffff;"></div>
<div style="left:294px;top:216px;width:1583px;height:609px;background:#ffffff;"></div>
<div style="left:294px;top:216px;width:1582px;height:1px;background:#7a8a99;"></div>
<div class="hd" style="left:295px;top:217px;width:77px;height:19px;"></div>
<span class="t" style="left:298.93px;top:219px;font-size:12.75px;line-height:16px;font-weight:bold;color:#333;">ID</span>
<div class="hd" style="left:372px;top:217px;width:179px;height:19px;"></div>
<span class="t" style="left:375.96px;top:219px;font-size:12.75px;line-height:16px;font-weight:bold;color:#333;">Create date</span>
<div class="hd" style="left:551px;top:217px;width:97px;height:19px;"></div>
<span class="t" style="left:554.93px;top:219px;font-size:12.75px;line-height:16px;font-weight:bold;color:#333;">Priority</span>
<div class="hd" style="left:648px;top:217px;width:468px;height:19px;"></div>
<span class="t" style="left:651.93px;top:219px;font-size:12.75px;line-height:16px;font-weight:bold;color:#333;">Message</span>
<div class="hd" style="left:1116px;top:217px;width:247px;height:19px;"></div>
<span class="t" style="left:1119.96px;top:219px;font-size:12.75px;line-height:16px;font-weight:bold;color:#333;">OID</span>
<div class="hd" style="left:1363px;top:217px;width:58px;height:19px;"></div>
<span class="t" style="left:1367.18px;top:219px;font-size:12.75px;line-height:16px;font-weight:bold;color:#333;">Status</span>
<div class="hd" style="left:1421px;top:217px;width:58px;height:19px;"></div>
<span class="t" style="left:1424.93px;top:219px;font-size:12.75px;line-height:16px;font-weight:bold;color:#333;">Par 1</span>
<div class="hd" style="left:1479px;top:217px;width:58px;height:19px;"></div>
<span class="t" style="left:1482.93px;top:219px;font-size:12.75px;line-height:16px;font-weight:bold;color:#333;">Par 2</span>
<div class="hd" style="left:1537px;top:217px;width:58px;height:19px;"></div>
<span class="t" style="left:1540.93px;top:219px;font-size:12.75px;line-height:16px;font-weight:bold;color:#333;">Par 3</span>
<div class="hd" style="left:1595px;top:217px;width:73px;height:19px;"></div>
<span class="t" style="left:1599.18px;top:219px;font-size:12.75px;line-height:16px;font-weight:bold;color:#333;">Source IP</span>
<div class="hd" style="left:1668px;top:217px;width:58px;height:19px;"></div>
<span class="t" style="left:1671.93px;top:219px;font-size:12.75px;line-height:16px;font-weight:bold;color:#333;">Finis...</span>
<div class="hd" style="left:1726px;top:217px;width:60px;height:19px;"></div>
<span class="t" style="left:1729.93px;top:219px;font-size:12.75px;line-height:16px;font-weight:bold;color:#333;">Finis...</span>
<div class="hd" style="left:1786px;top:217px;width:75px;height:19px;"></div>
<span class="t" style="left:1789.93px;top:219px;font-size:12.75px;line-height:16px;font-weight:bold;color:#333;">Finish d...</span>
<div class="hd" style="left:1861px;top:217px;width:15px;height:19px;"></div>
<span class="t" style="left:1864.30px;top:219px;font-size:12.75px;line-height:16px;font-weight:bold;color:#333;">..</span>
<div style="left:1876px;top:217px;width:15px;height:19px;background:#eeeeee;"></div>
<svg style="left:319px;top:224px" width="9" height="5" viewBox="0 0 9 5"><path d="M0 0 H9 L4.5 4.6 Z" fill="#1f3a5a"/></svg>
<div id="tb" style="left:294px;top:236px;width:1582px;height:589px;overflow:hidden;">
<div style="left:0px;top:0px;width:1582px;height:24px;background:#ffffff;border-bottom:1px solid #808080;"></div>
<div style="left:257px;top:0px;width:96px;height:23px;background:#00f000;"></div>
<span class="t" style="left:1.53px;top:4px;font-size:12.5px;line-height:16px;letter-spacing:0.047px;color:#333;">1612</span>
<span class="t" style="left:78.48px;top:4px;font-size:12.5px;line-height:16px;letter-spacing:0.017px;color:#333;">20.03.2026 10:41:52</span>
<span class="t" style="left:355.40px;top:4px;font-size:12.5px;line-height:16px;letter-spacing:-0.184px;color:#333;">ONT7/1 (ELTX8C000030) link up</span>
<span class="t" style="left:822.53px;top:4px;font-size:12.5px;line-height:16px;letter-spacing:0.040px;color:#333;">1.3.6.1.4.1.35265.1.209.1000.4.4.1.1</span>
<span class="t" style="left:1069.87px;top:4px;font-size:12.5px;line-height:16px;letter-spacing:0.178px;color:#333;">Finished</span>
<span class="t" style="left:1127.53px;top:4px;font-size:12.5px;line-height:16px;letter-spacing:0.047px;color:#333;">1</span>
<span class="t" style="left:1185.37px;top:4px;font-size:12.5px;line-height:16px;letter-spacing:0.047px;color:#333;">7</span>
<span class="t" style="left:1243.53px;top:4px;font-size:12.5px;line-height:16px;letter-spacing:0.047px;color:#333;">1</span>
<span class="t" style="left:1301.53px;top:4px;font-size:12.5px;line-height:16px;letter-spacing:0.038px;color:#333;">192.168....</span>
<span class="t" style="left:1376.00px;top:4px;font-size:12.5px;line-height:16px;letter-spacing:-0.310px;color:#333;">AUTO</span>
<span class="t" style="left:1434.00px;top:4px;font-size:12.5px;line-height:16px;letter-spacing:-0.310px;color:#333;">AUTO</span>
<span class="t" style="left:1492.48px;top:4px;font-size:12.5px;line-height:16px;letter-spacing:0.038px;color:#333;">20.03.20...</span>
<span class="t" style="left:1567.06px;top:4px;font-size:12.5px;line-height:16px;letter-spacing:0.027px;color:#333;">...</span>
<span class="t" style="left:285.51px;top:4px;font-size:12.5px;line-height:16px;letter-spacing:-0.287px;color:#333;">CLEAR</span>
<div style="left:0px;top:24px;width:1582px;height:24px;background:#e0e0e0;border-bottom:1px solid #808080;"></div>
<div style="left:257px;top:24px;width:96px;height:23px;background:#ff0033;"></div>
<span class="t" style="left:1.53px;top:28px;font-size:12.5px;line-height:16px;letter-spacing:0.047px;color:#333;">1606</span>
<span class="t" style="left:78.48px;top:28px;font-size:12.5px;line-height:16px;letter-spacing:0.017px;color:#333;">20.03.2026 10:41:45</span>
<span class="t" style="left:355.40px;top:28px;font-size:12.5px;line-height:16px;letter-spacing:-0.178px;color:#333;">ONT7/1 (ELTX8C000030) link down</span>
<span class="t" style="left:822.53px;top:28px;font-size:12.5px;line-height:16px;letter-spacing:0.040px;color:#333;">1.3.6.1.4.1.35265.1.209.1000.4.5.1.1</span>
<span class="t" style="left:1069.87px;top:28px;font-size:12.5px;line-height:16px;letter-spacing:-0.119px;color:#333;">New</span>
<span class="t" style="left:1127.53px;top:28px;font-size:12.5px;line-height:16px;letter-spacing:0.047px;color:#333;">1</span>
<span class="t" style="left:1185.37px;top:28px;font-size:12.5px;line-height:16px;letter-spacing:0.047px;color:#333;">7</span>
<span class="t" style="left:1243.53px;top:28px;font-size:12.5px;line-height:16px;letter-spacing:0.047px;color:#333;">1</span>
<span class="t" style="left:1301.53px;top:28px;font-size:12.5px;line-height:16px;letter-spacing:0.038px;color:#333;">192.168....</span>
<span class="t" style="left:1567.06px;top:28px;font-size:12.5px;line-height:16px;letter-spacing:0.027px;color:#333;">...</span>
<span class="t" style="left:277.86px;top:28px;font-size:12.5px;line-height:16px;letter-spacing:-0.249px;color:#333;">CRITICAL</span>
<div style="left:0px;top:48px;width:1582px;height:24px;background:#ffffff;border-bottom:1px solid #808080;"></div>
<div style="left:257px;top:48px;width:96px;height:23px;background:#00f000;"></div>
<span class="t" style="left:1.53px;top:52px;font-size:12.5px;line-height:16px;letter-spacing:0.047px;color:#333;">1611</span>
<span class="t" style="left:78.48px;top:52px;font-size:12.5px;line-height:16px;letter-spacing:0.017px;color:#333;">20.03.2026 10:41:52</span>
<span class="t" style="left:355.40px;top:52px;font-size:12.5px;line-height:16px;letter-spacing:-0.185px;color:#333;">ONT7/3 (ELTX92000000) link up</span>
<span class="t" style="left:822.53px;top:52px;font-size:12.5px;line-height:16px;letter-spacing:0.040px;color:#333;">1.3.6.1.4.1.35265.1.209.1000.4.4.1.1</span>
<span class="t" style="left:1069.87px;top:52px;font-size:12.5px;line-height:16px;letter-spacing:0.178px;color:#333;">Finished</span>
<span class="t" style="left:1127.53px;top:52px;font-size:12.5px;line-height:16px;letter-spacing:0.047px;color:#333;">1</span>
<span class="t" style="left:1185.37px;top:52px;font-size:12.5px;line-height:16px;letter-spacing:0.047px;color:#333;">7</span>
<span class="t" style="left:1243.45px;top:52px;font-size:12.5px;line-height:16px;letter-spacing:0.047px;color:#333;">3</span>
<span class="t" style="left:1301.53px;top:52px;font-size:12.5px;line-height:16px;letter-spacing:0.038px;color:#333;">192.168....</span>
<span class="t" style="left:1376.00px;top:52px;font-size:12.5px;line-height:16px;letter-spacing:-0.310px;color:#333;">AUTO</span>
<span class="t" style="left:1434.00px;top:52px;font-size:12.5px;line-height:16px;letter-spacing:-0.310px;color:#333;">AUTO</span>
<span class="t" style="left:1492.48px;top:52px;font-size:12.5px;line-height:16px;letter-spacing:0.038px;color:#333;">20.03.20...</span>
<span class="t" style="left:1567.06px;top:52px;font-size:12.5px;line-height:16px;letter-spacing:0.027px;color:#333;">...</span>
<span class="t" style="left:285.51px;top:52px;font-size:12.5px;line-height:16px;letter-spacing:-0.287px;color:#333;">CLEAR</span>
<div style="left:0px;top:72px;width:1582px;height:24px;background:#e0e0e0;border-bottom:1px solid #808080;"></div>
<div style="left:257px;top:72px;width:96px;height:23px;background:#ff0033;"></div>
<span class="t" style="left:1.53px;top:76px;font-size:12.5px;line-height:16px;letter-spacing:0.047px;color:#333;">1597</span>
<span class="t" style="left:78.48px;top:76px;font-size:12.5px;line-height:16px;letter-spacing:0.017px;color:#333;">20.03.2026 10:36:17</span>
<span class="t" style="left:355.40px;top:76px;font-size:12.5px;line-height:16px;letter-spacing:-0.179px;color:#333;">ONT7/3 (ELTX92000000) link down</span>
<span class="t" style="left:822.53px;top:76px;font-size:12.5px;line-height:16px;letter-spacing:0.040px;color:#333;">1.3.6.1.4.1.35265.1.209.1000.4.5.1.1</span>
<span class="t" style="left:1069.87px;top:76px;font-size:12.5px;line-height:16px;letter-spacing:-0.119px;color:#333;">New</span>
<span class="t" style="left:1127.53px;top:76px;font-size:12.5px;line-height:16px;letter-spacing:0.047px;color:#333;">1</span>
<span class="t" style="left:1185.37px;top:76px;font-size:12.5px;line-height:16px;letter-spacing:0.047px;color:#333;">7</span>
<span class="t" style="left:1243.45px;top:76px;font-size:12.5px;line-height:16px;letter-spacing:0.047px;color:#333;">3</span>
<span class="t" style="left:1301.53px;top:76px;font-size:12.5px;line-height:16px;letter-spacing:0.038px;color:#333;">192.168....</span>
<span class="t" style="left:1567.06px;top:76px;font-size:12.5px;line-height:16px;letter-spacing:0.027px;color:#333;">...</span>
<span class="t" style="left:277.86px;top:76px;font-size:12.5px;line-height:16px;letter-spacing:-0.249px;color:#333;">CRITICAL</span>
<div style="left:0px;top:96px;width:1582px;height:24px;background:#ffffff;border-bottom:1px solid #808080;"></div>
<div style="left:257px;top:96px;width:96px;height:23px;background:#00f000;"></div>
<span class="t" style="left:1.53px;top:100px;font-size:12.5px;line-height:16px;letter-spacing:0.047px;color:#333;">1609</span>
<span class="t" style="left:78.48px;top:100px;font-size:12.5px;line-height:16px;letter-spacing:0.017px;color:#333;">20.03.2026 10:41:50</span>
<span class="t" style="left:354.87px;top:100px;font-size:12.5px;line-height:16px;letter-spacing:-0.089px;color:#333;">Received PON alarm: Loss of Signal Normalized (slot 1, PON port 7, ONT 1)</span>
<span class="t" style="left:822.53px;top:100px;font-size:12.5px;line-height:16px;letter-spacing:0.040px;color:#333;">1.3.6.1.4.1.35265.1.209.1000.3.1.1.2</span>
<span class="t" style="left:1069.87px;top:100px;font-size:12.5px;line-height:16px;letter-spacing:0.178px;color:#333;">Finished</span>
<span class="t" style="left:1127.53px;top:100px;font-size:12.5px;line-height:16px;letter-spacing:0.047px;color:#333;">1</span>
<span class="t" style="left:1185.37px;top:100px;font-size:12.5px;line-height:16px;letter-spacing:0.047px;color:#333;">7</span>
<span class="t" style="left:1243.53px;top:100px;font-size:12.5px;line-height:16px;letter-spacing:0.047px;color:#333;">1</span>
<span class="t" style="left:1301.53px;top:100px;font-size:12.5px;line-height:16px;letter-spacing:0.038px;color:#333;">192.168....</span>
<span class="t" style="left:1376.00px;top:100px;font-size:12.5px;line-height:16px;letter-spacing:-0.310px;color:#333;">AUTO</span>
<span class="t" style="left:1434.00px;top:100px;font-size:12.5px;line-height:16px;letter-spacing:-0.310px;color:#333;">AUTO</span>
<span class="t" style="left:1492.48px;top:100px;font-size:12.5px;line-height:16px;letter-spacing:0.038px;color:#333;">20.03.20...</span>
<span class="t" style="left:285.51px;top:100px;font-size:12.5px;line-height:16px;letter-spacing:-0.287px;color:#333;">CLEAR</span>
<div style="left:0px;top:120px;width:1582px;height:24px;background:#b8cfe5;border-bottom:1px solid #808080;"></div>
<div style="left:257px;top:120px;width:96px;height:23px;background:#ff9933;"></div>
<span class="t" style="left:1.53px;top:124px;font-size:12.5px;line-height:16px;letter-spacing:0.047px;color:#333;">1607</span>
<span class="t" style="left:78.48px;top:124px;font-size:12.5px;line-height:16px;letter-spacing:0.017px;color:#333;">20.03.2026 10:41:45</span>
<span class="t" style="left:355.40px;top:124px;font-size:12.5px;line-height:16px;letter-spacing:0.006px;color:#333;">ONT(slot 1, PON port 7, ONT id 1) disconnected, reason: Loss of Signal</span>
<span class="t" style="left:822.53px;top:124px;font-size:12.5px;line-height:16px;letter-spacing:0.040px;color:#333;">1.3.6.1.4.1.35265.1.209.1000.4.16.1.1</span>
<span class="t" style="left:1069.87px;top:124px;font-size:12.5px;line-height:16px;letter-spacing:-0.119px;color:#333;">New</span>
<span class="t" style="left:1127.53px;top:124px;font-size:12.5px;line-height:16px;letter-spacing:0.047px;color:#333;">1</span>
<span class="t" style="left:1185.37px;top:124px;font-size:12.5px;line-height:16px;letter-spacing:0.047px;color:#333;">7</span>
<span class="t" style="left:1243.53px;top:124px;font-size:12.5px;line-height:16px;letter-spacing:0.047px;color:#333;">1</span>
<span class="t" style="left:1301.53px;top:124px;font-size:12.5px;line-height:16px;letter-spacing:0.038px;color:#333;">192.168....</span>
<span class="t" style="left:285.16px;top:124px;font-size:12.5px;line-height:16px;letter-spacing:-0.292px;color:#333;">MAJOR</span>
<div style="left:353px;top:119px;width:469px;height:25px;border:1px solid #6382bf;"></div>
<div style="left:0px;top:144px;width:1582px;height:24px;background:#ffffff;border-bottom:1px solid #808080;"></div>
<div style="left:257px;top:144px;width:96px;height:23px;background:#ffff00;"></div>
<span class="t" style="left:1.53px;top:148px;font-size:12.5px;line-height:16px;letter-spacing:0.047px;color:#333;">1605</span>
<span class="t" style="left:78.48px;top:148px;font-size:12.5px;line-height:16px;letter-spacing:0.017px;color:#333;">20.03.2026 10:41:45</span>
<span class="t" style="left:354.87px;top:148px;font-size:12.5px;line-height:16px;letter-spacing:-0.049px;color:#333;">Received PON alarm: Loss of Signal (slot 1, PON port 7, ONT 1)</span>
<span class="t" style="left:822.53px;top:148px;font-size:12.5px;line-height:16px;letter-spacing:0.040px;color:#333;">1.3.6.1.4.1.35265.1.209.1000.3.1.1.1</span>
<span class="t" style="left:1069.87px;top:148px;font-size:12.5px;line-height:16px;letter-spacing:0.178px;color:#333;">Finished</span>
<span class="t" style="left:1127.53px;top:148px;font-size:12.5px;line-height:16px;letter-spacing:0.047px;color:#333;">1</span>
<span class="t" style="left:1185.37px;top:148px;font-size:12.5px;line-height:16px;letter-spacing:0.047px;color:#333;">7</span>
<span class="t" style="left:1243.53px;top:148px;font-size:12.5px;line-height:16px;letter-spacing:0.047px;color:#333;">1</span>
<span class="t" style="left:1301.53px;top:148px;font-size:12.5px;line-height:16px;letter-spacing:0.038px;color:#333;">192.168....</span>
<span class="t" style="left:1376.00px;top:148px;font-size:12.5px;line-height:16px;letter-spacing:-0.310px;color:#333;">AUTO</span>
<span class="t" style="left:1432.53px;top:148px;font-size:12.5px;line-height:16px;letter-spacing:0.047px;color:#333;">1609</span>
<span class="t" style="left:1492.48px;top:148px;font-size:12.5px;line-height:16px;letter-spacing:0.038px;color:#333;">20.03.20...</span>
<span class="t" style="left:284.77px;top:148px;font-size:12.5px;line-height:16px;letter-spacing:-0.298px;color:#333;">MINOR</span>
<div style="left:0px;top:168px;width:1582px;height:24px;background:#e0e0e0;border-bottom:1px solid #808080;"></div>
<div style="left:257px;top:168px;width:96px;height:23px;background:#00f000;"></div>
<span class="t" style="left:1.53px;top:172px;font-size:12.5px;line-height:16px;letter-spacing:0.047px;color:#333;">1608</span>
<span class="t" style="left:78.48px;top:172px;font-size:12.5px;line-height:16px;letter-spacing:0.017px;color:#333;">20.03.2026 10:41:50</span>
<span class="t" style="left:355.40px;top:172px;font-size:12.5px;line-height:16px;letter-spacing:-0.185px;color:#333;">ONT7/2 (ELTX87023580) link up</span>
<span class="t" style="left:822.53px;top:172px;font-size:12.5px;line-height:16px;letter-spacing:0.040px;color:#333;">1.3.6.1.4.1.35265.1.209.1000.4.4.1.1</span>
<span class="t" style="left:1069.87px;top:172px;font-size:12.5px;line-height:16px;letter-spacing:0.178px;color:#333;">Finished</span>
<span class="t" style="left:1127.53px;top:172px;font-size:12.5px;line-height:16px;letter-spacing:0.047px;color:#333;">1</span>
<span class="t" style="left:1185.37px;top:172px;font-size:12.5px;line-height:16px;letter-spacing:0.047px;color:#333;">7</span>
<span class="t" style="left:1243.48px;top:172px;font-size:12.5px;line-height:16px;letter-spacing:0.047px;color:#333;">2</span>
<span class="t" style="left:1301.53px;top:172px;font-size:12.5px;line-height:16px;letter-spacing:0.038px;color:#333;">192.168....</span>
<span class="t" style="left:1376.00px;top:172px;font-size:12.5px;line-height:16px;letter-spacing:-0.310px;color:#333;">AUTO</span>
<span class="t" style="left:1434.00px;top:172px;font-size:12.5px;line-height:16px;letter-spacing:-0.310px;color:#333;">AUTO</span>
<span class="t" style="left:1492.48px;top:172px;font-size:12.5px;line-height:16px;letter-spacing:0.038px;color:#333;">20.03.20...</span>
<span class="t" style="left:1567.06px;top:172px;font-size:12.5px;line-height:16px;letter-spacing:0.027px;color:#333;">...</span>
<span class="t" style="left:285.51px;top:172px;font-size:12.5px;line-height:16px;letter-spacing:-0.287px;color:#333;">CLEAR</span>
<div style="left:0px;top:192px;width:1582px;height:24px;background:#ffffff;border-bottom:1px solid #808080;"></div>
<div style="left:257px;top:192px;width:96px;height:23px;background:#ff0033;"></div>
<span class="t" style="left:1.53px;top:196px;font-size:12.5px;line-height:16px;letter-spacing:0.047px;color:#333;">1592</span>
<span class="t" style="left:78.48px;top:196px;font-size:12.5px;line-height:16px;letter-spacing:0.017px;color:#333;">20.03.2026 10:36:16</span>
<span class="t" style="left:355.40px;top:196px;font-size:12.5px;line-height:16px;letter-spacing:-0.179px;color:#333;">ONT7/2 (ELTX87023580) link down</span>
<span class="t" style="left:822.53px;top:196px;font-size:12.5px;line-height:16px;letter-spacing:0.040px;color:#333;">1.3.6.1.4.1.35265.1.209.1000.4.5.1.1</span>
<span class="t" style="left:1069.87px;top:196px;font-size:12.5px;line-height:16px;letter-spacing:-0.119px;color:#333;">New</span>
<span class="t" style="left:1127.53px;top:196px;font-size:12.5px;line-height:16px;letter-spacing:0.047px;color:#333;">1</span>
<span class="t" style="left:1185.37px;top:196px;font-size:12.5px;line-height:16px;letter-spacing:0.047px;color:#333;">7</span>
<span class="t" style="left:1243.48px;top:196px;font-size:12.5px;line-height:16px;letter-spacing:0.047px;color:#333;">2</span>
<span class="t" style="left:1301.53px;top:196px;font-size:12.5px;line-height:16px;letter-spacing:0.038px;color:#333;">192.168....</span>
<span class="t" style="left:1567.06px;top:196px;font-size:12.5px;line-height:16px;letter-spacing:0.027px;color:#333;">...</span>
<span class="t" style="left:277.86px;top:196px;font-size:12.5px;line-height:16px;letter-spacing:-0.249px;color:#333;">CRITICAL</span>
<div style="left:0px;top:216px;width:1582px;height:24px;background:#e0e0e0;border-bottom:1px solid #808080;"></div>
<div style="left:257px;top:216px;width:96px;height:23px;background:#ff0033;"></div>
<span class="t" style="left:1.53px;top:220px;font-size:12.5px;line-height:16px;letter-spacing:0.047px;color:#333;">1601</span>
<span class="t" style="left:78.48px;top:220px;font-size:12.5px;line-height:16px;letter-spacing:0.017px;color:#333;">20.03.2026 10:41:09</span>
<span class="t" style="left:355.28px;top:220px;font-size:12.5px;line-height:16px;letter-spacing:-0.005px;color:#333;">Speed of the fan 1 (1440 rpm) is beyond the normal values</span>
<span class="t" style="left:822.53px;top:220px;font-size:12.5px;line-height:16px;letter-spacing:0.040px;color:#333;">1.3.6.1.4.1.35265.1.209.1000.1.1.1.1</span>
<span class="t" style="left:1069.87px;top:220px;font-size:12.5px;line-height:16px;letter-spacing:-0.119px;color:#333;">New</span>
<span class="t" style="left:1127.53px;top:220px;font-size:12.5px;line-height:16px;letter-spacing:0.047px;color:#333;">1</span>
<span class="t" style="left:1185.53px;top:220px;font-size:12.5px;line-height:16px;letter-spacing:0.047px;color:#333;">1440</span>
<span class="t" style="left:1243.58px;top:220px;font-size:12.5px;line-height:16px;letter-spacing:0.047px;color:#333;">0</span>
<span class="t" style="left:1301.53px;top:220px;font-size:12.5px;line-height:16px;letter-spacing:0.038px;color:#333;">192.168....</span>
<span class="t" style="left:277.86px;top:220px;font-size:12.5px;line-height:16px;letter-spacing:-0.249px;color:#333;">CRITICAL</span>
<div style="left:0px;top:240px;width:1582px;height:24px;background:#ffffff;border-bottom:1px solid #808080;"></div>
<div style="left:257px;top:240px;width:96px;height:23px;background:#ff0033;"></div>
<span class="t" style="left:1.53px;top:244px;font-size:12.5px;line-height:16px;letter-spacing:0.047px;color:#333;">1602</span>
<span class="t" style="left:78.48px;top:244px;font-size:12.5px;line-height:16px;letter-spacing:0.017px;color:#333;">20.03.2026 10:41:09</span>
<span class="t" style="left:355.28px;top:244px;font-size:12.5px;line-height:16px;letter-spacing:-0.005px;color:#333;">Speed of the fan 2 (1440 rpm) is beyond the normal values</span>
<span class="t" style="left:822.53px;top:244px;font-size:12.5px;line-height:16px;letter-spacing:0.040px;color:#333;">1.3.6.1.4.1.35265.1.209.1000.1.1.1.1</span>
<span class="t" style="left:1069.87px;top:244px;font-size:12.5px;line-height:16px;letter-spacing:-0.119px;color:#333;">New</span>
<span class="t" style="left:1127.48px;top:244px;font-size:12.5px;line-height:16px;letter-spacing:0.047px;color:#333;">2</span>
<span class="t" style="left:1185.53px;top:244px;font-size:12.5px;line-height:16px;letter-spacing:0.047px;color:#333;">1440</span>
<span class="t" style="left:1243.58px;top:244px;font-size:12.5px;line-height:16px;letter-spacing:0.047px;color:#333;">0</span>
<span class="t" style="left:1301.53px;top:244px;font-size:12.5px;line-height:16px;letter-spacing:0.038px;color:#333;">192.168....</span>
<span class="t" style="left:277.86px;top:244px;font-size:12.5px;line-height:16px;letter-spacing:-0.249px;color:#333;">CRITICAL</span>
<div style="left:0px;top:264px;width:1582px;height:24px;background:#e0e0e0;border-bottom:1px solid #808080;"></div>
<div style="left:257px;top:264px;width:96px;height:23px;background:#ff0033;"></div>
<span class="t" style="left:1.53px;top:268px;font-size:12.5px;line-height:16px;letter-spacing:0.047px;color:#333;">1603</span>
<span class="t" style="left:78.48px;top:268px;font-size:12.5px;line-height:16px;letter-spacing:0.017px;color:#333;">20.03.2026 10:41:09</span>
<span class="t" style="left:355.28px;top:268px;font-size:12.5px;line-height:16px;letter-spacing:-0.005px;color:#333;">Speed of the fan 3 (1500 rpm) is beyond the normal values</span>
<span class="t" style="left:822.53px;top:268px;font-size:12.5px;line-height:16px;letter-spacing:0.040px;color:#333;">1.3.6.1.4.1.35265.1.209.1000.1.1.1.1</span>
<span class="t" style="left:1069.87px;top:268px;font-size:12.5px;line-height:16px;letter-spacing:-0.119px;color:#333;">New</span>
<span class="t" style="left:1127.45px;top:268px;font-size:12.5px;line-height:16px;letter-spacing:0.047px;color:#333;">3</span>
<span class="t" style="left:1185.53px;top:268px;font-size:12.5px;line-height:16px;letter-spacing:0.047px;color:#333;">1500</span>
<span class="t" style="left:1243.58px;top:268px;font-size:12.5px;line-height:16px;letter-spacing:0.047px;color:#333;">0</span>
<span class="t" style="left:1301.53px;top:268px;font-size:12.5px;line-height:16px;letter-spacing:0.038px;color:#333;">192.168....</span>
<span class="t" style="left:277.86px;top:268px;font-size:12.5px;line-height:16px;letter-spacing:-0.249px;color:#333;">CRITICAL</span>
<div style="left:0px;top:288px;width:1582px;height:24px;background:#ffffff;border-bottom:1px solid #808080;"></div>
<div style="left:257px;top:288px;width:96px;height:23px;background:#ff0033;"></div>
<span class="t" style="left:1.53px;top:292px;font-size:12.5px;line-height:16px;letter-spacing:0.047px;color:#333;">1604</span>
<span class="t" style="left:78.48px;top:292px;font-size:12.5px;line-height:16px;letter-spacing:0.017px;color:#333;">20.03.2026 10:41:09</span>
<span class="t" style="left:355.28px;top:292px;font-size:12.5px;line-height:16px;letter-spacing:-0.005px;color:#333;">Speed of the fan 4 (1440 rpm) is beyond the normal values</span>
<span class="t" style="left:822.53px;top:292px;font-size:12.5px;line-height:16px;letter-spacing:0.040px;color:#333;">1.3.6.1.4.1.35265.1.209.1000.1.1.1.1</span>
<span class="t" style="left:1069.87px;top:292px;font-size:12.5px;line-height:16px;letter-spacing:-0.119px;color:#333;">New</span>
<span class="t" style="left:1127.79px;top:292px;font-size:12.5px;line-height:16px;letter-spacing:0.047px;color:#333;">4</span>
<span class="t" style="left:1185.53px;top:292px;font-size:12.5px;line-height:16px;letter-spacing:0.047px;color:#333;">1440</span>
<span class="t" style="left:1243.58px;top:292px;font-size:12.5px;line-height:16px;letter-spacing:0.047px;color:#333;">0</span>
<span class="t" style="left:1301.53px;top:292px;font-size:12.5px;line-height:16px;letter-spacing:0.038px;color:#333;">192.168....</span>
<span class="t" style="left:277.86px;top:292px;font-size:12.5px;line-height:16px;letter-spacing:-0.249px;color:#333;">CRITICAL</span>
<div style="left:0px;top:312px;width:1582px;height:24px;background:#e0e0e0;border-bottom:1px solid #808080;"></div>
<div style="left:257px;top:312px;width:96px;height:23px;background:#ff9933;"></div>
<span class="t" style="left:1.53px;top:316px;font-size:12.5px;line-height:16px;letter-spacing:0.047px;color:#333;">1598</span>
<span class="t" style="left:78.48px;top:316px;font-size:12.5px;line-height:16px;letter-spacing:0.017px;color:#333;">20.03.2026 10:36:17</span>
<span class="t" style="left:355.40px;top:316px;font-size:12.5px;line-height:16px;letter-spacing:-0.031px;color:#333;">ONT(slot 1, PON port 7, ONT id 3) disconnected, reason: Dying Gasp</span>
<span class="t" style="left:822.53px;top:316px;font-size:12.5px;line-height:16px;letter-spacing:0.040px;color:#333;">1.3.6.1.4.1.35265.1.209.1000.4.16.1.1</span>
<span class="t" style="left:1069.87px;top:316px;font-size:12.5px;line-height:16px;letter-spacing:-0.119px;color:#333;">New</span>
<span class="t" style="left:1127.53px;top:316px;font-size:12.5px;line-height:16px;letter-spacing:0.047px;color:#333;">1</span>
<span class="t" style="left:1185.37px;top:316px;font-size:12.5px;line-height:16px;letter-spacing:0.047px;color:#333;">7</span>
<span class="t" style="left:1243.45px;top:316px;font-size:12.5px;line-height:16px;letter-spacing:0.047px;color:#333;">3</span>
<span class="t" style="left:1301.53px;top:316px;font-size:12.5px;line-height:16px;letter-spacing:0.038px;color:#333;">192.168....</span>
<span class="t" style="left:285.16px;top:316px;font-size:12.5px;line-height:16px;letter-spacing:-0.292px;color:#333;">MAJOR</span>
<div style="left:0px;top:336px;width:1582px;height:24px;background:#ffffff;border-bottom:1px solid #808080;"></div>
<div style="left:257px;top:336px;width:96px;height:23px;background:#ff9933;"></div>
<span class="t" style="left:1.53px;top:340px;font-size:12.5px;line-height:16px;letter-spacing:0.047px;color:#333;">1591</span>
<span class="t" style="left:78.48px;top:340px;font-size:12.5px;line-height:16px;letter-spacing:0.017px;color:#333;">20.03.2026 10:36:16</span>
<span class="t" style="left:355.40px;top:340px;font-size:12.5px;line-height:16px;letter-spacing:-0.031px;color:#333;">ONT(slot 1, PON port 7, ONT id 2) disconnected, reason: Dying Gasp</span>
<span class="t" style="left:822.53px;top:340px;font-size:12.5px;line-height:16px;letter-spacing:0.040px;color:#333;">1.3.6.1.4.1.35265.1.209.1000.4.16.1.1</span>
<span class="t" style="left:1069.87px;top:340px;font-size:12.5px;line-height:16px;letter-spacing:-0.119px;color:#333;">New</span>
<span class="t" style="left:1127.53px;top:340px;font-size:12.5px;line-height:16px;letter-spacing:0.047px;color:#333;">1</span>
<span class="t" style="left:1185.37px;top:340px;font-size:12.5px;line-height:16px;letter-spacing:0.047px;color:#333;">7</span>
<span class="t" style="left:1243.48px;top:340px;font-size:12.5px;line-height:16px;letter-spacing:0.047px;color:#333;">2</span>
<span class="t" style="left:1301.53px;top:340px;font-size:12.5px;line-height:16px;letter-spacing:0.038px;color:#333;">192.168....</span>
<span class="t" style="left:285.16px;top:340px;font-size:12.5px;line-height:16px;letter-spacing:-0.292px;color:#333;">MAJOR</span>
<div style="left:0px;top:360px;width:1582px;height:24px;background:#e0e0e0;border-bottom:1px solid #808080;"></div>
<div style="left:257px;top:360px;width:96px;height:23px;background:#ff0033;"></div>
<span class="t" style="left:1.53px;top:364px;font-size:12.5px;line-height:16px;letter-spacing:0.047px;color:#333;">1584</span>
<span class="t" style="left:78.48px;top:364px;font-size:12.5px;line-height:16px;letter-spacing:0.017px;color:#333;">20.03.2026 09:34:51</span>
<span class="t" style="left:355.28px;top:364px;font-size:12.5px;line-height:16px;letter-spacing:-0.005px;color:#333;">Speed of the fan 1 (4020 rpm) is beyond the normal values</span>
<span class="t" style="left:822.53px;top:364px;font-size:12.5px;line-height:16px;letter-spacing:0.040px;color:#333;">1.3.6.1.4.1.35265.1.209.1000.1.1.1.1</span>
<span class="t" style="left:1069.87px;top:364px;font-size:12.5px;line-height:16px;letter-spacing:-0.119px;color:#333;">New</span>
<span class="t" style="left:1127.53px;top:364px;font-size:12.5px;line-height:16px;letter-spacing:0.047px;color:#333;">1</span>
<span class="t" style="left:1185.79px;top:364px;font-size:12.5px;line-height:16px;letter-spacing:0.047px;color:#333;">4020</span>
<span class="t" style="left:1243.58px;top:364px;font-size:12.5px;line-height:16px;letter-spacing:0.047px;color:#333;">0</span>
<span class="t" style="left:1301.53px;top:364px;font-size:12.5px;line-height:16px;letter-spacing:0.038px;color:#333;">192.168....</span>
<span class="t" style="left:277.86px;top:364px;font-size:12.5px;line-height:16px;letter-spacing:-0.249px;color:#333;">CRITICAL</span>
<div style="left:0px;top:384px;width:1582px;height:24px;background:#ffffff;border-bottom:1px solid #808080;"></div>
<div style="left:257px;top:384px;width:96px;height:23px;background:#ff0033;"></div>
<span class="t" style="left:1.53px;top:388px;font-size:12.5px;line-height:16px;letter-spacing:0.047px;color:#333;">1583</span>
<span class="t" style="left:78.48px;top:388px;font-size:12.5px;line-height:16px;letter-spacing:0.017px;color:#333;">20.03.2026 09:34:51</span>
<span class="t" style="left:355.28px;top:388px;font-size:12.5px;line-height:16px;letter-spacing:-0.005px;color:#333;">Speed of the fan 2 (4020 rpm) is beyond the normal values</span>
<span class="t" style="left:822.53px;top:388px;font-size:12.5px;line-height:16px;letter-spacing:0.040px;color:#333;">1.3.6.1.4.1.35265.1.209.1000.1.1.1.1</span>
<span class="t" style="left:1069.87px;top:388px;font-size:12.5px;line-height:16px;letter-spacing:-0.119px;color:#333;">New</span>
<span class="t" style="left:1127.48px;top:388px;font-size:12.5px;line-height:16px;letter-spacing:0.047px;color:#333;">2</span>
<span class="t" style="left:1185.79px;top:388px;font-size:12.5px;line-height:16px;letter-spacing:0.047px;color:#333;">4020</span>
<span class="t" style="left:1243.58px;top:388px;font-size:12.5px;line-height:16px;letter-spacing:0.047px;color:#333;">0</span>
<span class="t" style="left:1301.53px;top:388px;font-size:12.5px;line-height:16px;letter-spacing:0.038px;color:#333;">192.168....</span>
<span class="t" style="left:277.86px;top:388px;font-size:12.5px;line-height:16px;letter-spacing:-0.249px;color:#333;">CRITICAL</span>
<div style="left:0px;top:408px;width:1582px;height:24px;background:#e0e0e0;border-bottom:1px solid #808080;"></div>
<div style="left:257px;top:408px;width:96px;height:23px;background:#ff0033;"></div>
<span class="t" style="left:1.53px;top:412px;font-size:12.5px;line-height:16px;letter-spacing:0.047px;color:#333;">1582</span>
<span class="t" style="left:78.48px;top:412px;font-size:12.5px;line-height:16px;letter-spacing:0.017px;color:#333;">20.03.2026 09:34:51</span>
<span class="t" style="left:355.28px;top:412px;font-size:12.5px;line-height:16px;letter-spacing:-0.005px;color:#333;">Speed of the fan 3 (3960 rpm) is beyond the normal values</span>
<span class="t" style="left:822.53px;top:412px;font-size:12.5px;line-height:16px;letter-spacing:0.040px;color:#333;">1.3.6.1.4.1.35265.1.209.1000.1.1.1.1</span>
<span class="t" style="left:1069.87px;top:412px;font-size:12.5px;line-height:16px;letter-spacing:-0.119px;color:#333;">New</span>
<span class="t" style="left:1127.45px;top:412px;font-size:12.5px;line-height:16px;letter-spacing:0.047px;color:#333;">3</span>
<span class="t" style="left:1185.45px;top:412px;font-size:12.5px;line-height:16px;letter-spacing:0.047px;color:#333;">3960</span>
<span class="t" style="left:1243.58px;top:412px;font-size:12.5px;line-height:16px;letter-spacing:0.047px;color:#333;">0</span>
<span class="t" style="left:1301.53px;top:412px;font-size:12.5px;line-height:16px;letter-spacing:0.038px;color:#333;">192.168....</span>
<span class="t" style="left:277.86px;top:412px;font-size:12.5px;line-height:16px;letter-spacing:-0.249px;color:#333;">CRITICAL</span>
<div style="left:0px;top:432px;width:1582px;height:24px;background:#ffffff;border-bottom:1px solid #808080;"></div>
<div style="left:257px;top:432px;width:96px;height:23px;background:#ff0033;"></div>
<span class="t" style="left:1.53px;top:436px;font-size:12.5px;line-height:16px;letter-spacing:0.047px;color:#333;">1585</span>
<span class="t" style="left:78.48px;top:436px;font-size:12.5px;line-height:16px;letter-spacing:0.017px;color:#333;">20.03.2026 09:34:51</span>
<span class="t" style="left:355.28px;top:436px;font-size:12.5px;line-height:16px;letter-spacing:-0.005px;color:#333;">Speed of the fan 4 (3960 rpm) is beyond the normal values</span>
<span class="t" style="left:822.53px;top:436px;font-size:12.5px;line-height:16px;letter-spacing:0.040px;color:#333;">1.3.6.1.4.1.35265.1.209.1000.1.1.1.1</span>
<span class="t" style="left:1069.87px;top:436px;font-size:12.5px;line-height:16px;letter-spacing:-0.119px;color:#333;">New</span>
<span class="t" style="left:1127.79px;top:436px;font-size:12.5px;line-height:16px;letter-spacing:0.047px;color:#333;">4</span>
<span class="t" style="left:1185.45px;top:436px;font-size:12.5px;line-height:16px;letter-spacing:0.047px;color:#333;">3960</span>
<span class="t" style="left:1243.58px;top:436px;font-size:12.5px;line-height:16px;letter-spacing:0.047px;color:#333;">0</span>
<span class="t" style="left:1301.53px;top:436px;font-size:12.5px;line-height:16px;letter-spacing:0.038px;color:#333;">192.168....</span>
<span class="t" style="left:277.86px;top:436px;font-size:12.5px;line-height:16px;letter-spacing:-0.249px;color:#333;">CRITICAL</span>
<div style="left:0px;top:456px;width:1582px;height:24px;background:#e0e0e0;border-bottom:1px solid #808080;"></div>
<div style="left:257px;top:456px;width:96px;height:23px;background:#00f000;"></div>
<span class="t" style="left:1.53px;top:460px;font-size:12.5px;line-height:16px;letter-spacing:0.047px;color:#333;">1576</span>
<span class="t" style="left:78.48px;top:460px;font-size:12.5px;line-height:16px;letter-spacing:0.017px;color:#333;">20.03.2026 09:01:09</span>
<span class="t" style="left:355.28px;top:460px;font-size:12.5px;line-height:16px;letter-spacing:0.033px;color:#333;">Speed of the fan 1 (2460 rpm) is back to normal</span>
<span class="t" style="left:822.53px;top:460px;font-size:12.5px;line-height:16px;letter-spacing:0.040px;color:#333;">1.3.6.1.4.1.35265.1.209.1000.1.1.1.2</span>
<span class="t" style="left:1069.87px;top:460px;font-size:12.5px;line-height:16px;letter-spacing:0.178px;color:#333;">Finished</span>
<span class="t" style="left:1127.53px;top:460px;font-size:12.5px;line-height:16px;letter-spacing:0.047px;color:#333;">1</span>
<span class="t" style="left:1185.48px;top:460px;font-size:12.5px;line-height:16px;letter-spacing:0.047px;color:#333;">2460</span>
<span class="t" style="left:1243.58px;top:460px;font-size:12.5px;line-height:16px;letter-spacing:0.047px;color:#333;">0</span>
<span class="t" style="left:1301.53px;top:460px;font-size:12.5px;line-height:16px;letter-spacing:0.038px;color:#333;">192.168....</span>
<span class="t" style="left:1376.00px;top:460px;font-size:12.5px;line-height:16px;letter-spacing:-0.310px;color:#333;">AUTO</span>
<span class="t" style="left:1434.00px;top:460px;font-size:12.5px;line-height:16px;letter-spacing:-0.310px;color:#333;">AUTO</span>
<span class="t" style="left:1492.48px;top:460px;font-size:12.5px;line-height:16px;letter-spacing:0.038px;color:#333;">20.03.20...</span>
<span class="t" style="left:285.51px;top:460px;font-size:12.5px;line-height:16px;letter-spacing:-0.287px;color:#333;">CLEAR</span>
<div style="left:0px;top:480px;width:1582px;height:24px;background:#ffffff;border-bottom:1px solid #808080;"></div>
<div style="left:257px;top:480px;width:96px;height:23px;background:#00f000;"></div>
<span class="t" style="left:1.53px;top:484px;font-size:12.5px;line-height:16px;letter-spacing:0.047px;color:#333;">1577</span>
<span class="t" style="left:78.48px;top:484px;font-size:12.5px;line-height:16px;letter-spacing:0.017px;color:#333;">20.03.2026 09:01:09</span>
<span class="t" style="left:355.28px;top:484px;font-size:12.5px;line-height:16px;letter-spacing:0.033px;color:#333;">Speed of the fan 2 (2460 rpm) is back to normal</span>
<span class="t" style="left:822.53px;top:484px;font-size:12.5px;line-height:16px;letter-spacing:0.040px;color:#333;">1.3.6.1.4.1.35265.1.209.1000.1.1.1.2</span>
<span class="t" style="left:1069.87px;top:484px;font-size:12.5px;line-height:16px;letter-spacing:0.178px;color:#333;">Finished</span>
<span class="t" style="left:1127.48px;top:484px;font-size:12.5px;line-height:16px;letter-spacing:0.047px;color:#333;">2</span>
<span class="t" style="left:1185.48px;top:484px;font-size:12.5px;line-height:16px;letter-spacing:0.047px;color:#333;">2460</span>
<span class="t" style="left:1243.58px;top:484px;font-size:12.5px;line-height:16px;letter-spacing:0.047px;color:#333;">0</span>
<span class="t" style="left:1301.53px;top:484px;font-size:12.5px;line-height:16px;letter-spacing:0.038px;color:#333;">192.168....</span>
<span class="t" style="left:1376.00px;top:484px;font-size:12.5px;line-height:16px;letter-spacing:-0.310px;color:#333;">AUTO</span>
<span class="t" style="left:1434.00px;top:484px;font-size:12.5px;line-height:16px;letter-spacing:-0.310px;color:#333;">AUTO</span>
<span class="t" style="left:1492.48px;top:484px;font-size:12.5px;line-height:16px;letter-spacing:0.038px;color:#333;">20.03.20...</span>
<span class="t" style="left:285.51px;top:484px;font-size:12.5px;line-height:16px;letter-spacing:-0.287px;color:#333;">CLEAR</span>
<div style="left:0px;top:504px;width:1582px;height:24px;background:#e0e0e0;border-bottom:1px solid #808080;"></div>
<div style="left:257px;top:504px;width:96px;height:23px;background:#00f000;"></div>
<span class="t" style="left:1.53px;top:508px;font-size:12.5px;line-height:16px;letter-spacing:0.047px;color:#333;">1578</span>
<span class="t" style="left:78.48px;top:508px;font-size:12.5px;line-height:16px;letter-spacing:0.017px;color:#333;">20.03.2026 09:01:09</span>
<span class="t" style="left:355.28px;top:508px;font-size:12.5px;line-height:16px;letter-spacing:0.033px;color:#333;">Speed of the fan 3 (2460 rpm) is back to normal</span>
<span class="t" style="left:822.53px;top:508px;font-size:12.5px;line-height:16px;letter-spacing:0.040px;color:#333;">1.3.6.1.4.1.35265.1.209.1000.1.1.1.2</span>
<span class="t" style="left:1069.87px;top:508px;font-size:12.5px;line-height:16px;letter-spacing:0.178px;color:#333;">Finished</span>
<span class="t" style="left:1127.45px;top:508px;font-size:12.5px;line-height:16px;letter-spacing:0.047px;color:#333;">3</span>
<span class="t" style="left:1185.48px;top:508px;font-size:12.5px;line-height:16px;letter-spacing:0.047px;color:#333;">2460</span>
<span class="t" style="left:1243.58px;top:508px;font-size:12.5px;line-height:16px;letter-spacing:0.047px;color:#333;">0</span>
<span class="t" style="left:1301.53px;top:508px;font-size:12.5px;line-height:16px;letter-spacing:0.038px;color:#333;">192.168....</span>
<span class="t" style="left:1376.00px;top:508px;font-size:12.5px;line-height:16px;letter-spacing:-0.310px;color:#333;">AUTO</span>
<span class="t" style="left:1434.00px;top:508px;font-size:12.5px;line-height:16px;letter-spacing:-0.310px;color:#333;">AUTO</span>
<span class="t" style="left:1492.48px;top:508px;font-size:12.5px;line-height:16px;letter-spacing:0.038px;color:#333;">20.03.20...</span>
<span class="t" style="left:285.51px;top:508px;font-size:12.5px;line-height:16px;letter-spacing:-0.287px;color:#333;">CLEAR</span>
<div style="left:0px;top:528px;width:1582px;height:24px;background:#ffffff;border-bottom:1px solid #808080;"></div>
<div style="left:257px;top:528px;width:96px;height:23px;background:#00f000;"></div>
<span class="t" style="left:1.53px;top:532px;font-size:12.5px;line-height:16px;letter-spacing:0.047px;color:#333;">1579</span>
<span class="t" style="left:78.48px;top:532px;font-size:12.5px;line-height:16px;letter-spacing:0.017px;color:#333;">20.03.2026 09:01:09</span>
<span class="t" style="left:355.28px;top:532px;font-size:12.5px;line-height:16px;letter-spacing:0.033px;color:#333;">Speed of the fan 4 (2460 rpm) is back to normal</span>
<span class="t" style="left:822.53px;top:532px;font-size:12.5px;line-height:16px;letter-spacing:0.040px;color:#333;">1.3.6.1.4.1.35265.1.209.1000.1.1.1.2</span>
<span class="t" style="left:1069.87px;top:532px;font-size:12.5px;line-height:16px;letter-spacing:0.178px;color:#333;">Finished</span>
<span class="t" style="left:1127.79px;top:532px;font-size:12.5px;line-height:16px;letter-spacing:0.047px;color:#333;">4</span>
<span class="t" style="left:1185.48px;top:532px;font-size:12.5px;line-height:16px;letter-spacing:0.047px;color:#333;">2460</span>
<span class="t" style="left:1243.58px;top:532px;font-size:12.5px;line-height:16px;letter-spacing:0.047px;color:#333;">0</span>
<span class="t" style="left:1301.53px;top:532px;font-size:12.5px;line-height:16px;letter-spacing:0.038px;color:#333;">192.168....</span>
<span class="t" style="left:1376.00px;top:532px;font-size:12.5px;line-height:16px;letter-spacing:-0.310px;color:#333;">AUTO</span>
<span class="t" style="left:1434.00px;top:532px;font-size:12.5px;line-height:16px;letter-spacing:-0.310px;color:#333;">AUTO</span>
<span class="t" style="left:1492.48px;top:532px;font-size:12.5px;line-height:16px;letter-spacing:0.038px;color:#333;">20.03.20...</span>
<span class="t" style="left:285.51px;top:532px;font-size:12.5px;line-height:16px;letter-spacing:-0.287px;color:#333;">CLEAR</span>
<div style="left:0px;top:552px;width:1582px;height:24px;background:#e0e0e0;border-bottom:1px solid #808080;"></div>
<div style="left:257px;top:552px;width:96px;height:23px;background:#ff0033;"></div>
<span class="t" style="left:1.53px;top:556px;font-size:12.5px;line-height:16px;letter-spacing:0.047px;color:#333;">1554</span>
<span class="t" style="left:78.48px;top:556px;font-size:12.5px;line-height:16px;letter-spacing:0.017px;color:#333;">20.03.2026 08:59:39</span>
<span class="t" style="left:355.28px;top:556px;font-size:12.5px;line-height:16px;letter-spacing:-0.005px;color:#333;">Speed of the fan 3 (1380 rpm) is beyond the normal values</span>
<span class="t" style="left:822.53px;top:556px;font-size:12.5px;line-height:16px;letter-spacing:0.040px;color:#333;">1.3.6.1.4.1.35265.1.209.1000.1.1.1.1</span>
<span class="t" style="left:1069.87px;top:556px;font-size:12.5px;line-height:16px;letter-spacing:0.178px;color:#333;">Finished</span>
<span class="t" style="left:1127.45px;top:556px;font-size:12.5px;line-height:16px;letter-spacing:0.047px;color:#333;">3</span>
<span class="t" style="left:1185.53px;top:556px;font-size:12.5px;line-height:16px;letter-spacing:0.047px;color:#333;">1380</span>
<span class="t" style="left:1243.58px;top:556px;font-size:12.5px;line-height:16px;letter-spacing:0.047px;color:#333;">0</span>
<span class="t" style="left:1301.53px;top:556px;font-size:12.5px;line-height:16px;letter-spacing:0.038px;color:#333;">192.168....</span>
<span class="t" style="left:1376.00px;top:556px;font-size:12.5px;line-height:16px;letter-spacing:-0.310px;color:#333;">AUTO</span>
<span class="t" style="left:1432.53px;top:556px;font-size:12.5px;line-height:16px;letter-spacing:0.047px;color:#333;">1578</span>
<span class="t" style="left:1492.48px;top:556px;font-size:12.5px;line-height:16px;letter-spacing:0.038px;color:#333;">20.03.20...</span>
<span class="t" style="left:277.86px;top:556px;font-size:12.5px;line-height:16px;letter-spacing:-0.249px;color:#333;">CRITICAL</span>
<div style="left:0px;top:576px;width:1582px;height:24px;background:#ffffff;border-bottom:1px solid #808080;"></div>
<div style="left:257px;top:576px;width:96px;height:23px;background:#ff0033;"></div>
<span class="t" style="left:1.53px;top:580px;font-size:12.5px;line-height:16px;letter-spacing:0.047px;color:#333;">1555</span>
<span class="t" style="left:78.48px;top:580px;font-size:12.5px;line-height:16px;letter-spacing:0.017px;color:#333;">20.03.2026 08:59:39</span>
<span class="t" style="left:355.28px;top:580px;font-size:12.5px;line-height:16px;letter-spacing:-0.005px;color:#333;">Speed of the fan 4 (1500 rpm) is beyond the normal values</span>
<span class="t" style="left:822.53px;top:580px;font-size:12.5px;line-height:16px;letter-spacing:0.040px;color:#333;">1.3.6.1.4.1.35265.1.209.1000.1.1.1.1</span>
<span class="t" style="left:1069.87px;top:580px;font-size:12.5px;line-height:16px;letter-spacing:0.178px;color:#333;">Finished</span>
<span class="t" style="left:1127.79px;top:580px;font-size:12.5px;line-height:16px;letter-spacing:0.047px;color:#333;">4</span>
<span class="t" style="left:1185.53px;top:580px;font-size:12.5px;line-height:16px;letter-spacing:0.047px;color:#333;">1500</span>
<span class="t" style="left:1243.58px;top:580px;font-size:12.5px;line-height:16px;letter-spacing:0.047px;color:#333;">0</span>
<span class="t" style="left:1301.53px;top:580px;font-size:12.5px;line-height:16px;letter-spacing:0.038px;color:#333;">192.168....</span>
<span class="t" style="left:1376.00px;top:580px;font-size:12.5px;line-height:16px;letter-spacing:-0.310px;color:#333;">AUTO</span>
<span class="t" style="left:1432.53px;top:580px;font-size:12.5px;line-height:16px;letter-spacing:0.047px;color:#333;">1579</span>
<span class="t" style="left:1492.48px;top:580px;font-size:12.5px;line-height:16px;letter-spacing:0.038px;color:#333;">20.03.20...</span>
<span class="t" style="left:277.86px;top:580px;font-size:12.5px;line-height:16px;letter-spacing:-0.249px;color:#333;">CRITICAL</span>
<div style="left:0px;top:0px;width:1px;height:589px;background:#808080;"></div>
<div style="left:77px;top:0px;width:1px;height:589px;background:#808080;"></div>
<div style="left:256px;top:0px;width:1px;height:589px;background:#808080;"></div>
<div style="left:353px;top:0px;width:1px;height:589px;background:#808080;"></div>
<div style="left:821px;top:0px;width:1px;height:589px;background:#808080;"></div>
<div style="left:1068px;top:0px;width:1px;height:589px;background:#808080;"></div>
<div style="left:1126px;top:0px;width:1px;height:589px;background:#808080;"></div>
<div style="left:1184px;top:0px;width:1px;height:589px;background:#808080;"></div>
<div style="left:1242px;top:0px;width:1px;height:589px;background:#808080;"></div>
<div style="left:1300px;top:0px;width:1px;height:589px;background:#808080;"></div>
<div style="left:1373px;top:0px;width:1px;height:589px;background:#808080;"></div>
<div style="left:1431px;top:0px;width:1px;height:589px;background:#808080;"></div>
<div style="left:1491px;top:0px;width:1px;height:589px;background:#808080;"></div>
<div style="left:1566px;top:0px;width:1px;height:589px;background:#808080;"></div>
<div style="left:1581px;top:0px;width:1px;height:589px;background:#808080;"></div>
</div>
<div style="left:1876px;top:236px;width:15px;height:589px;background:#eeeeee;border-left:1px solid #7a8a99;"></div>
<div style="left:1877px;top:236px;width:14px;height:15px;background:linear-gradient(90deg,#ffffff,#eef3f9);border:1px solid #b8cfe5;border-bottom:1px solid #7a8a99;"></div>
<svg style="left:1880px;top:241px" width="8" height="4" viewBox="0 0 8 4"><path d="M0 4 H8 L4 0 Z" fill="#222"/></svg>
<div style="left:1877px;top:810px;width:14px;height:15px;background:linear-gradient(90deg,#ffffff,#eef3f9);border:1px solid #b8cfe5;border-top:1px solid #7a8a99;"></div>
<svg style="left:1879px;top:815px" width="9" height="4" viewBox="0 0 9 4"><path d="M0 0 H9 L4.5 4 Z" fill="#222"/></svg>
<div style="left:1877px;top:251px;width:14px;height:211px;background:linear-gradient(90deg,#c4d7ec 0%,#ffffff 28%,#e6eef7 60%,#b8cfe5 100%);border:1px solid #6382bf;border-right:none;box-shadow:inset 1px 1px 0 #ffffff;"></div>
<div style="left:1880px;top:353px;width:9px;height:1px;background:#6382bf;"></div>
<div style="left:1880px;top:355px;width:9px;height:1px;background:#6382bf;"></div>
<div style="left:1880px;top:357px;width:9px;height:1px;background:#6382bf;"></div>
<div style="left:287px;top:839px;width:1623px;height:11px;background:#eeeeee;"></div>
<div style="left:287px;top:840px;width:1623px;height:1px;background:#fbfbfb;"></div>
<svg style="left:287px;top:841px" width="1623" height="7" viewBox="0 0 1623 7"><defs><pattern id="dq" x="2" y="2" width="4" height="4" patternUnits="userSpaceOnUse"><rect x="0" y="0" width="1" height="1" fill="#ffffff"/><rect x="1" y="1" width="1" height="1" fill="#8a99a8"/><rect x="2" y="2" width="1" height="1" fill="#ffffff"/><rect x="3" y="3" width="1" height="1" fill="#8a99a8"/></pattern></defs><rect x="13" y="2" width="1608" height="4" fill="url(#dq)"/><path d="M2.5 5 H11.5 L7 .8 Z" fill="#6382bf"/><path d="M14.5 1 H23.5 L19 5.4 Z" fill="#6382bf"/></svg>
<div style="left:287px;top:849px;width:1626px;height:1px;background:#7a8a99;"></div>
<div style="left:287px;top:850px;width:1624px;height:226px;background:#ebad8a;"></div>
<div style="left:287px;top:870px;width:1624px;height:206px;background:#c8ddf2;border-top:1px solid #6382bf;border-left:1px solid #6382bf;border-right:1px solid #7a8a99;border-bottom:1px solid #7a8a99;"></div>
<div style="left:289px;top:874px;width:1619px;height:199px;background:#eeeeee;"></div>
<svg style="left:289px;top:852px" width="62" height="22" viewBox="0 0 62 22"><path d="M.5 22 V6.5 L6.5 .5 H61.5 V18.5" fill="#c8ddf2" stroke="#7a8a99" stroke-width="1"/><path d="M1.5 22 V7 L7 1.5 H60.5" fill="none" stroke="#ffffff" stroke-width="1"/><rect x="1" y="18" width="60" height="4" fill="#c8ddf2"/><path d="M1.5 22 V17" stroke="#fff" stroke-width="1"/></svg>
<span class="t" style="left:299.84px;top:854px;font-size:12.75px;line-height:16px;letter-spacing:0.002px;font-weight:bold;color:#333;">Tasks</span>
<div style="left:290px;top:875px;width:1614px;height:53px;border:1px solid #9a9a9a;border-bottom:none;box-shadow:inset 1px 1px 0 #ffffff, 1px 0 0 #ffffff;"></div>
<div style="left:290px;top:927px;width:10px;height:1px;background:#9a9a9a;"></div>
<div style="left:291px;top:928px;width:9px;height:1px;background:#ffffff;"></div>
<div style="left:291px;top:930px;width:1616px;height:1px;background:#7a8a99;"></div>
<div style="left:291px;top:931px;width:1616px;height:1px;background:#f8f8f8;"></div>
<span class="t" style="left:303.05px;top:886px;font-size:9.9px;line-height:12px;font-weight:bold;color:#333;">Task name:</span>
<div class="tf" style="left:370px;top:880px;width:129px;height:23px;"></div>
<span class="t" style="left:503.69px;top:886px;font-size:9.9px;line-height:12px;font-weight:bold;color:#333;">User:</span>
<div class="tf" style="left:536px;top:880px;width:129px;height:23px;"></div>
<span class="t" style="left:669.49px;top:886px;font-size:9.9px;line-height:12px;font-weight:bold;color:#333;">IP address:</span>
<div class="tf" style="left:734px;top:880px;width:129px;height:23px;"></div>
<span class="t" style="left:867.99px;top:886px;font-size:9.9px;line-height:12px;font-weight:bold;color:#333;">Status:</span>
<div style="left:911px;top:881px;width:133px;height:22px;border:1px solid #7a8a99;background:#eeeeee;box-shadow:inset 0 0 0 1px #b8cfe5;"></div>
<div style="left:1024px;top:881px;width:20px;height:22px;border:1px solid #7a8a99;background:linear-gradient(#dde8f3 0%,#ffffff 30%,#dde8f3 60%,#b8cfe5 100%);box-shadow:inset 1px 1px 0 #ffffff;"></div>
<svg style="left:1029px;top:890px" width="11" height="6" viewBox="0 0 11 6"><path d="M.3 0 H10.7 L5.5 5.4 Z" fill="#333"/></svg>
<div style="left:300px;top:904px;width:79px;height:26px;border:1px solid #7a8a99;background:linear-gradient(#dde8f3 0%,#ffffff 30%,#dde8f3 60%,#b8cfe5 100%);box-shadow:inset 1px 1px 0 rgba(255,255,255,.75);"></div>
<span class="t" style="left:324.23px;top:910px;font-size:12.75px;line-height:16px;letter-spacing:0.163px;font-weight:bold;color:#333;">Reload</span>
<svg style="left:304.8px;top:908.3px" width="16" height="16" viewBox="0 0 16 16"><path d="M2 7 A6 6 0 0 1 12.5 3.5 L14.5 1.5 V7.5 H8.5 L10.7 5.3 A3.6 3.6 0 0 0 4.6 7 Z" fill="#5fc028" stroke="#3a8a18" stroke-width=".6"/><path d="M14 9 A6 6 0 0 1 3.5 12.5 L1.5 14.5 V8.5 H7.5 L5.3 10.7 A3.6 3.6 0 0 0 11.4 9 Z" fill="#5fc028" stroke="#3a8a18" stroke-width=".6"/></svg>
<div style="left:380px;top:904px;width:24px;height:26px;border:1px solid #7a8a99;background:linear-gradient(#dde8f3 0%,#ffffff 30%,#dde8f3 60%,#b8cfe5 100%);box-shadow:inset 1px 1px 0 rgba(255,255,255,.75);"></div>
<svg style="left:384px;top:908.5px" width="16" height="16" viewBox="0 0 16 16"><rect x=".8" y="1.3" width="14.4" height="13.4" fill="#fff" stroke="#2a3570" stroke-width="1.4"/><path d="M6 5 H13 M6 8 H13 M6 11 H13" stroke="#9a9ac8" stroke-width="1.2"/><path d="M2.5 4 l1.2 1.6 l1.2 -1.6 M2.5 7 l1.2 1.6 l1.2 -1.6 M2.5 10 l1.2 1.6 l1.2 -1.6" stroke="#1a8a1a" stroke-width="1" fill="none"/></svg>
<div style="left:405px;top:904px;width:228px;height:26px;border:1px solid #7a8a99;background:linear-gradient(#dde8f3 0%,#ffffff 30%,#dde8f3 60%,#b8cfe5 100%);box-shadow:inset 1px 1px 0 rgba(255,255,255,.75);"></div>
<span class="t" style="left:429.96px;top:910px;font-size:12.75px;line-height:16px;letter-spacing:-0.070px;font-weight:bold;color:#333;">Change the displayed fields</span>
<svg style="left:410px;top:908.5px" width="16" height="16" viewBox="0 0 16 16"><rect x=".7" y="1.2" width="14.6" height="13.6" rx="1.5" fill="#fff" stroke="#4a7fd8" stroke-width="1.2"/><rect x="1" y="1.5" width="14" height="2.8" fill="#5b8fe8"/><path d="M3 9 V6.5 H5.5 M10.5 6.5 H13 V9 M13 10.5 V13 H10.5 M5.5 13 H3 V10.5" stroke="#1a6a2a" stroke-width="1.5" fill="none"/></svg>
<div style="left:634px;top:904px;width:24px;height:26px;border:1px solid #7a8a99;background:linear-gradient(#dde8f3 0%,#ffffff 30%,#dde8f3 60%,#b8cfe5 100%);box-shadow:inset 1px 1px 0 rgba(255,255,255,.75);"></div>
<svg style="left:638px;top:908px" width="16" height="16" viewBox="0 0 16 16"><path d="M2 7 L7 9.5 V15.5 L2 12.5 Z" fill="#c89a4a"/><path d="M7 9.5 L11 7.5 V13 L7 15.5 Z" fill="#9a6a2a"/><path d="M2 7 L6 5 L11 7.5 L7 9.5 Z" fill="#6a4a1a"/><path d="M5.5 8 Q6 3.5 10.5 3.2 L10 1 L15 3 L12 7 L11.5 5 Q8.5 5 7.5 8.5 Z" fill="#4fb020" stroke="#2e7a10" stroke-width=".5"/></svg>
<div style="left:660px;top:904px;width:24px;height:26px;border:1px solid #7a8a99;background:linear-gradient(#dde8f3 0%,#ffffff 30%,#dde8f3 60%,#b8cfe5 100%);box-shadow:inset 1px 1px 0 rgba(255,255,255,.75);"></div>
<svg style="left:664px;top:908.5px" width="16" height="16" viewBox="0 0 16 16"><path d="M.8 .8 H12.5 L15.2 3.5 V15.2 H.8 Z" fill="#3a8af0" stroke="#1a5ac8" stroke-width=".9"/><rect x="3.5" y=".8" width="8" height="5" fill="#dfe8f8"/><rect x="9" y="1.5" width="1.6" height="3.2" fill="#3a6ac8"/><rect x="2.8" y="8" width="10.4" height="7.2" fill="#fff"/><path d="M3.5 9.5 H12.5 M3.5 11.5 H12.5 M3.5 13.5 H12.5" stroke="#222" stroke-width=".8"/></svg>
<div style="left:686px;top:904px;width:61px;height:26px;border:1px solid #7a8a99;background:linear-gradient(#dde8f3 0%,#ffffff 30%,#dde8f3 60%,#b8cfe5 100%);box-shadow:inset 1px 1px 0 rgba(255,255,255,.75);"></div>
<span class="t" style="left:709.33px;top:910px;font-size:12.75px;line-height:16px;letter-spacing:-0.124px;font-weight:bold;color:#333;">Help</span>
<svg style="left:690px;top:908px" width="17" height="17" viewBox="0 0 17 17"><circle cx="8.5" cy="8.5" r="8" fill="#dfe9fb"/><circle cx="8.5" cy="8.5" r="6.8" fill="#2f6fe0"/><circle cx="8.5" cy="6" r="4.5" fill="#5b93f0" opacity=".6"/><text x="8.5" y="12.6" font-family="DejaVu Sans" font-weight="bold" font-size="11" fill="#fff" text-anchor="middle">?</text></svg>
<div style="left:747px;top:904px;width:71px;height:23px;border:1px solid #9a9a9a;box-shadow:inset 1px 1px 0 #ffffff, 1px 1px 0 #ffffff;"></div>
<span class="t" style="left:750.49px;top:911px;font-size:9.9px;line-height:12px;font-weight:bold;color:#333;">H-scroll</span>
<div style="left:799px;top:910px;width:13px;height:13px;border:1px solid #7a8a99;background:linear-gradient(135deg,#ffffff 0%,#e8eff7 45%,#b8cfe5 100%);box-shadow:inset 1px 1px 0 #ffffff;"></div>
<div style="left:820px;top:904px;width:97px;height:23px;border:1px solid #9a9a9a;box-shadow:inset 1px 1px 0 #ffffff, 1px 1px 0 #ffffff;"></div>
<span class="t" style="left:825.15px;top:911px;font-size:9.9px;line-height:12px;font-weight:bold;color:#333;">Auto-reload</span>
<div style="left:898px;top:910px;width:13px;height:13px;border:1px solid #7a8a99;background:linear-gradient(135deg,#ffffff 0%,#e8eff7 45%,#b8cfe5 100%);box-shadow:inset 1px 1px 0 #ffffff;"></div>
<svg style="left:900px;top:912px" width="10" height="10" viewBox="0 0 10 10"><path d="M1.5 5 L3.8 8 L8.5 1.5" stroke="#222" stroke-width="1.6" fill="none"/></svg>
<div style="left:919px;top:904px;width:113px;height:26px;border:1px solid #7a8a99;background:linear-gradient(#dde8f3 0%,#ffffff 30%,#dde8f3 60%,#b8cfe5 100%);box-shadow:inset 1px 1px 0 rgba(255,255,255,.75);"></div>
<span class="t" style="left:944.06px;top:910px;font-size:12.75px;line-height:16px;letter-spacing:-0.123px;font-weight:bold;color:#333;">Clear filters</span>
<svg style="left:923px;top:907px" width="18" height="18" viewBox="0 0 18 18"><rect x="1" y="1" width="9" height="11" fill="#f4f4f4" stroke="#c4c4c4" stroke-width=".8"/><rect x="4" y="3.5" width="9" height="11" fill="#f4f4f4" stroke="#c4c4c4" stroke-width=".8"/><rect x="7" y="6" width="9" height="11" fill="#fafafa" stroke="#bcbcbc" stroke-width=".8"/><path d="M8.5 9 H14.5 M8.5 11 H14.5 M8.5 13 H14.5 M8.5 15 H14.5" stroke="#c8c8c8" stroke-width="1"/></svg>
<div style="left:289px;top:932px;width:1618px;height:140px;background:#eeeeee;"></div>
<div style="left:289px;top:948px;width:16px;height:124px;background:#ebad8a;"></div>
<div style="left:289px;top:932px;width:1618px;height:1px;background:#7a8a99;"></div>
<div style="left:305px;top:932px;width:1px;height:140px;background:#7a8a99;"></div>
<div style="left:1906px;top:875px;width:1px;height:197px;background:#7a8a99;"></div>
<div style="left:305px;top:1071px;width:1602px;height:1px;background:#7a8a99;"></div>
<div style="left:289px;top:1072px;width:1619px;height:1px;background:#ffffff;"></div>
<div style="left:1907px;top:875px;width:1px;height:198px;background:#ffffff;"></div>
<svg style="left:289px;top:932px" width="17" height="16" viewBox="0 0 17 16"><defs><linearGradient id="cg" x1="0" y1="0" x2="0" y2="1"><stop offset="0" stop-color="#eef3fa"/><stop offset="1" stop-color="#c6d6ea"/></linearGradient><linearGradient id="cb" x1="0" y1="0" x2="1" y2="1"><stop offset="0" stop-color="#3a86e8"/><stop offset="1" stop-color="#0a3fb0"/></linearGradient></defs><rect x=".5" y=".5" width="16" height="15" fill="url(#cg)" stroke="#7a8a99" stroke-width="1"/><rect x="1.2" y="1.2" width="14.2" height="2.9" rx="1.2" fill="url(#cb)"/><path d="M2.6 12.6 L8.2 6.6 L14 12.6" fill="none" stroke="#1560d0" stroke-width="2.4" stroke-linecap="round" stroke-linejoin="round"/></svg>
<div class="hd" style="left:306px;top:933px;width:160px;height:19px;"></div>
<span class="t" style="left:309.93px;top:935px;font-size:12.75px;line-height:16px;font-weight:bold;color:#333;">ID</span>
<div class="hd" style="left:466px;top:933px;width:160px;height:19px;"></div>
<span class="t" style="left:469.93px;top:935px;font-size:12.75px;line-height:16px;font-weight:bold;color:#333;">Process name</span>
<div class="hd" style="left:626px;top:933px;width:160px;height:19px;"></div>
<span class="t" style="left:629.93px;top:935px;font-size:12.75px;line-height:16px;font-weight:bold;color:#333;">User</span>
<div class="hd" style="left:786px;top:933px;width:160px;height:19px;"></div>
<span class="t" style="left:789.93px;top:935px;font-size:12.75px;line-height:16px;font-weight:bold;color:#333;">User IP</span>
<div class="hd" style="left:946px;top:933px;width:160px;height:19px;"></div>
<span class="t" style="left:950.18px;top:935px;font-size:12.75px;line-height:16px;font-weight:bold;color:#333;">Start date</span>
<div class="hd" style="left:1106px;top:933px;width:160px;height:19px;"></div>
<span class="t" style="left:1109.93px;top:935px;font-size:12.75px;line-height:16px;font-weight:bold;color:#333;">Finish date</span>
<div class="hd" style="left:1266px;top:933px;width:160px;height:19px;"></div>
<span class="t" style="left:1270.18px;top:935px;font-size:12.75px;line-height:16px;font-weight:bold;color:#333;">Status</span>
<div class="hd" style="left:1426px;top:933px;width:160px;height:19px;"></div>
<span class="t" style="left:1429.93px;top:935px;font-size:12.75px;line-height:16px;font-weight:bold;color:#333;">Progress</span>
<div class="hd" style="left:1586px;top:933px;width:160px;height:19px;"></div>
<span class="t" style="left:1589.93px;top:935px;font-size:12.75px;line-height:16px;font-weight:bold;color:#333;">Message</span>
<div class="hd" style="left:1746px;top:933px;width:160px;height:19px;"></div>
<span class="t" style="left:1749.93px;top:935px;font-size:12.75px;line-height:16px;font-weight:bold;color:#333;">Interrupt</span>
<svg style="left:330px;top:940px" width="9" height="5" viewBox="0 0 9 5"><path d="M0 0 H9 L4.5 4.6 Z" fill="#1f3a5a"/></svg>
<div style="left:306px;top:952px;width:1600px;height:24px;background:#b8cfe5;border-bottom:1px solid #808080;"></div>
<div style="left:465px;top:952px;width:1px;height:23px;background:#808080;"></div>
<div style="left:625px;top:952px;width:1px;height:23px;background:#808080;"></div>
<div style="left:785px;top:952px;width:1px;height:23px;background:#808080;"></div>
<div style="left:945px;top:952px;width:1px;height:23px;background:#808080;"></div>
<div style="left:1105px;top:952px;width:1px;height:23px;background:#808080;"></div>
<div style="left:1265px;top:952px;width:1px;height:23px;background:#808080;"></div>
<div style="left:1425px;top:952px;width:1px;height:23px;background:#808080;"></div>
<div style="left:1585px;top:952px;width:1px;height:23px;background:#808080;"></div>
<div style="left:1745px;top:952px;width:1px;height:23px;background:#808080;"></div>
<div style="left:1905px;top:952px;width:1px;height:23px;background:#808080;"></div>
<span class="t" style="left:455.13px;top:956px;font-size:12.5px;line-height:16px;letter-spacing:0.047px;color:#333;">1</span>
<span class="t" style="left:466.88px;top:956px;font-size:12.5px;line-height:16px;letter-spacing:-0.052px;color:#333;">Saving table to file</span>
<span class="t" style="left:627.25px;top:956px;font-size:12.5px;line-height:16px;letter-spacing:-0.138px;color:#333;">admin</span>
<span class="t" style="left:787.13px;top:956px;font-size:12.5px;line-height:16px;letter-spacing:0.042px;color:#333;">192.168.11.60</span>
<span class="t" style="left:947.08px;top:956px;font-size:12.5px;line-height:16px;letter-spacing:-0.040px;color:#333;">2026-03-20 10:07:16</span>
<span class="t" style="left:1107.08px;top:956px;font-size:12.5px;line-height:16px;letter-spacing:-0.040px;color:#333;">2026-03-20 10:07:16</span>
<div style="left:1266px;top:952px;width:159px;height:23px;background:#139df4;"></div>
<span class="t" style="left:1287.01px;top:956px;font-size:12.5px;line-height:16px;letter-spacing:-0.019px;color:#333;">Finished with error</span>
<div style="left:1427px;top:953px;width:158px;height:22px;background:#a3b8cc;border:1px solid #ffffff;border-top-color:#e6edf5;"></div>
<span class="t" style="left:1486.50px;top:956px;font-size:12.5px;line-height:16px;letter-spacing:-0.142px;color:#e8eef5;">100 %</span>
<span class="t" style="left:1586.77px;top:956px;font-size:12.5px;line-height:16px;letter-spacing:-0.109px;color:#333;">Deleting temporary file...</span>
</div>
</body></html>
